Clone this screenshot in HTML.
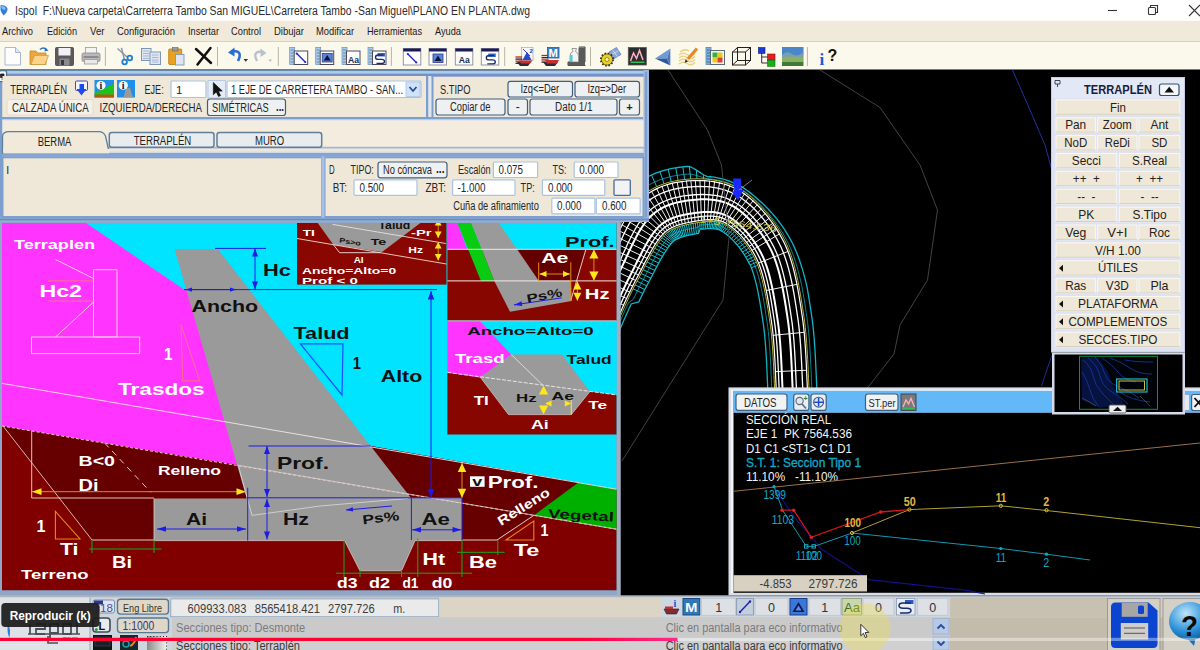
<!DOCTYPE html>
<html lang="es"><head><meta charset="utf-8"><title>Ispol - PLANO EN PLANTA.dwg</title>
<style>html,body{margin:0;padding:0;background:#000;overflow:hidden}body{width:1200px;height:650px}svg{display:block;font-family:"Liberation Sans",sans-serif}text{white-space:pre}</style></head>
<body>
<svg width="1200" height="650" viewBox="0 0 1200 650">
<rect x="0" y="0" width="1200" height="21" fill="#ffffff"/>
<path d="M0.5 5 L4 5.5 Q8 7 7.5 10 Q6.5 13.5 3.5 15.5 Q1.5 13 0.5 10 Z" fill="#2f7fd6" stroke="none" stroke-width="1" />
<path d="M1 6 L4 6.5 Q6.5 8 5 10 L2 9 Z" fill="#7fc0f4" stroke="none" stroke-width="1" />
<text x="15" y="15.3" font-size="12" fill="#2c2c2c" textLength="515" lengthAdjust="spacingAndGlyphs">Ispol  F:\Nueva carpeta\Carreterra Tambo San MIGUEL\Carretera Tambo -San Miguel\PLANO EN PLANTA.dwg</text>
<line x1="1108" y1="10.5" x2="1117" y2="10.5" stroke="#333" stroke-width="1.1" />
<rect x="1148.5" y="7.5" width="7" height="7" fill="none" stroke="#333" stroke-width="1.1" rx="1"/>
<path d="M1150.5 7.5 V5.5 H1157.5 V12.5 H1155.5" fill="none" stroke="#333" stroke-width="1.1" />
<line x1="1189" y1="5" x2="1200" y2="16" stroke="#333" stroke-width="1.1" />
<line x1="1189" y1="16" x2="1200" y2="5" stroke="#333" stroke-width="1.1" />
<rect x="0" y="20.8" width="1200" height="20.7" fill="#f1e9d9"/>
<text x="2" y="35" font-size="11" fill="#1a1a1a" textLength="31" lengthAdjust="spacingAndGlyphs">Archivo</text>
<text x="47" y="35" font-size="11" fill="#1a1a1a" textLength="30" lengthAdjust="spacingAndGlyphs">Edición</text>
<text x="90" y="35" font-size="11" fill="#1a1a1a" textLength="14.5" lengthAdjust="spacingAndGlyphs">Ver</text>
<text x="117" y="35" font-size="11" fill="#1a1a1a" textLength="58" lengthAdjust="spacingAndGlyphs">Configuración</text>
<text x="188" y="35" font-size="11" fill="#1a1a1a" textLength="31" lengthAdjust="spacingAndGlyphs">Insertar</text>
<text x="231" y="35" font-size="11" fill="#1a1a1a" textLength="30" lengthAdjust="spacingAndGlyphs">Control</text>
<text x="274" y="35" font-size="11" fill="#1a1a1a" textLength="30" lengthAdjust="spacingAndGlyphs">Dibujar</text>
<text x="316" y="35" font-size="11" fill="#1a1a1a" textLength="38" lengthAdjust="spacingAndGlyphs">Modificar</text>
<text x="367" y="35" font-size="11" fill="#1a1a1a" textLength="55" lengthAdjust="spacingAndGlyphs">Herramientas</text>
<text x="435" y="35" font-size="11" fill="#1a1a1a" textLength="26" lengthAdjust="spacingAndGlyphs">Ayuda</text>
<rect x="0" y="41.3" width="1200" height="28.7" fill="#fbf8ec"/>
<path d="M5 47.5 H15.5 L20.5 52.5 V65 H5 Z" fill="#fdfdff" stroke="#a9b8d4" stroke-width="1" />
<path d="M15.5 47.5 V52.5 H20.5" fill="#dfe6f4" stroke="#a9b8d4" stroke-width="1" />
<path d="M30 51 H36 L38 53 H46 V64.5 H30 Z" fill="#e9a642" stroke="#c98a2a" stroke-width="0.8" />
<path d="M31 64.5 L34.5 55.5 H48.5 L45 64.5 Z" fill="#fbd48c" stroke="#d69a3a" stroke-width="0.8" />
<path d="M40 49.5 Q43.5 46.5 46.5 49.5" fill="none" stroke="#2a6fc0" stroke-width="1.6" />
<polygon points="45,47.5 48.5,50.5 44.5,51.5" fill="#2a6fc0" stroke="none" stroke-width="1" />
<rect x="55.5" y="47.5" width="18" height="18" fill="#5a5a5c" stroke="#444" stroke-width="0.8" rx="1"/>
<rect x="58.5" y="48" width="12" height="7.5" fill="#f2f2f4"/>
<rect x="59.5" y="58.5" width="10" height="7" fill="#8a8a8c"/>
<rect x="61" y="60" width="3" height="5" fill="#3a3a3c"/>
<rect x="85.5" y="47.5" width="11" height="6" fill="#f4f4f4" stroke="#999" stroke-width="0.8"/>
<rect x="82" y="53" width="18" height="8.5" fill="#b9b9bb" stroke="#8a8a8a" stroke-width="0.8" rx="1.5"/>
<rect x="84.5" y="59.5" width="13" height="4.5" fill="#e9e9e9" stroke="#999" stroke-width="0.8"/>
<line x1="83.5" y1="57" x2="98.5" y2="57" stroke="#6e6e70" stroke-width="1.2" />
<line x1="105.4" y1="47" x2="105.4" y2="66" stroke="#b8b4a8" stroke-width="1" />
<line x1="117.5" y1="48.5" x2="127" y2="57" stroke="#8c98a8" stroke-width="1.5" />
<line x1="121.5" y1="47.8" x2="124.3" y2="59.5" stroke="#8c98a8" stroke-width="1.5" />
<circle cx="129.8" cy="58" r="2.3" fill="none" stroke="#1e7fd0" stroke-width="1.8" />
<circle cx="124.6" cy="62" r="2.3" fill="none" stroke="#1e7fd0" stroke-width="1.8" />
<rect x="141.5" y="48.5" width="9.5" height="12" fill="#dfe6f2" stroke="#7f95b8" stroke-width="1"/>
<rect x="150" y="52" width="10.5" height="12.5" fill="#dfe6f2" stroke="#7f95b8" stroke-width="1"/>
<line x1="152" y1="55" x2="158.5" y2="55" stroke="#8fa4c4" stroke-width="0.7" />
<line x1="152" y1="57.5" x2="158.5" y2="57.5" stroke="#8fa4c4" stroke-width="0.7" />
<line x1="152" y1="60" x2="158.5" y2="60" stroke="#8fa4c4" stroke-width="0.7" />
<line x1="152" y1="62" x2="158.5" y2="62" stroke="#8fa4c4" stroke-width="0.7" />
<line x1="143" y1="51" x2="149" y2="51" stroke="#8fa4c4" stroke-width="0.7" />
<line x1="143" y1="53.5" x2="149" y2="53.5" stroke="#8fa4c4" stroke-width="0.7" />
<line x1="143" y1="56" x2="149" y2="56" stroke="#8fa4c4" stroke-width="0.7" />
<line x1="143" y1="58.5" x2="149" y2="58.5" stroke="#8fa4c4" stroke-width="0.7" />
<rect x="168.7" y="49" width="13" height="15.5" fill="#e9a21f" stroke="#b87a10" stroke-width="0.8" rx="1"/>
<rect x="172.5" y="47.5" width="5.5" height="3.5" fill="#9c9c9c" stroke="#666" stroke-width="0.6"/>
<rect x="175.5" y="54.5" width="8.5" height="10.5" fill="#dfe6f2" stroke="#7f95b8" stroke-width="0.9"/>
<line x1="196" y1="49" x2="211" y2="63" stroke="#111" stroke-width="2.5" stroke-linecap="round"/>
<line x1="210.5" y1="48" x2="197.5" y2="64.5" stroke="#111" stroke-width="2.5" stroke-linecap="round"/>
<line x1="217.5" y1="47" x2="217.5" y2="66" stroke="#b8b4a8" stroke-width="1" />
<path d="M238 61 Q243 51 233.5 51" fill="none" stroke="#2a6fd0" stroke-width="2.6" />
<polygon points="228,52.5 234.5,47.5 234.5,56.5" fill="#2a6fd0" stroke="none" stroke-width="1" />
<polygon points="243.5,59 248,59 245.75,61.8" fill="#333" stroke="none" stroke-width="1" />
<path d="M257 61 Q252 51.5 261.5 51.5" fill="none" stroke="#b9c2cc" stroke-width="2.4" />
<polygon points="266.5,53 260.5,48.5 260.5,57" fill="#b9c2cc" stroke="none" stroke-width="1" />
<polygon points="268.5,59.5 272,59.5 270.2,61.8" fill="#b5b5b5" stroke="none" stroke-width="1" />
<line x1="278.3" y1="47" x2="278.3" y2="66" stroke="#b8b4a8" stroke-width="1" />
<rect x="289.7" y="47.5" width="5" height="17" fill="#a9cbe8" stroke="#6d8fb5" stroke-width="0.7"/>
<line x1="290.7" y1="50" x2="293.7" y2="50" stroke="#4a6a90" stroke-width="0.7" />
<line x1="290.7" y1="53" x2="293.7" y2="53" stroke="#4a6a90" stroke-width="0.7" />
<line x1="290.7" y1="56" x2="293.7" y2="56" stroke="#4a6a90" stroke-width="0.7" />
<line x1="290.7" y1="59" x2="293.7" y2="59" stroke="#4a6a90" stroke-width="0.7" />
<line x1="290.7" y1="62" x2="293.7" y2="62" stroke="#4a6a90" stroke-width="0.7" />
<rect x="294.2" y="51" width="13.5" height="13.5" fill="#fdfdfd" stroke="#4a4a5a" stroke-width="1"/>
<line x1="296.7" y1="53.5" x2="305.2" y2="62" stroke="#2a2ac8" stroke-width="1.4" />
<circle cx="296.7" cy="53.5" r="1.1" fill="#2a2ac8" stroke="none" stroke-width="1" />
<circle cx="305.2" cy="62" r="1.1" fill="#2a2ac8" stroke="none" stroke-width="1" />
<rect x="315.7" y="47.5" width="5" height="17" fill="#a9cbe8" stroke="#6d8fb5" stroke-width="0.7"/>
<line x1="316.7" y1="50" x2="319.7" y2="50" stroke="#4a6a90" stroke-width="0.7" />
<line x1="316.7" y1="53" x2="319.7" y2="53" stroke="#4a6a90" stroke-width="0.7" />
<line x1="316.7" y1="56" x2="319.7" y2="56" stroke="#4a6a90" stroke-width="0.7" />
<line x1="316.7" y1="59" x2="319.7" y2="59" stroke="#4a6a90" stroke-width="0.7" />
<line x1="316.7" y1="62" x2="319.7" y2="62" stroke="#4a6a90" stroke-width="0.7" />
<rect x="320.2" y="51" width="13.5" height="13.5" fill="#fdfdfd" stroke="#4a4a5a" stroke-width="1"/>
<rect x="322.2" y="53.5" width="10" height="8.5" fill="#5a86d8" stroke="#2a3a8a" stroke-width="0.8"/>
<polygon points="327.2,55 330.7,60.5 323.7,60.5" fill="#101040" stroke="none" stroke-width="1" />
<rect x="342" y="47.5" width="5" height="17" fill="#a9cbe8" stroke="#6d8fb5" stroke-width="0.7"/>
<line x1="343" y1="50" x2="346" y2="50" stroke="#4a6a90" stroke-width="0.7" />
<line x1="343" y1="53" x2="346" y2="53" stroke="#4a6a90" stroke-width="0.7" />
<line x1="343" y1="56" x2="346" y2="56" stroke="#4a6a90" stroke-width="0.7" />
<line x1="343" y1="59" x2="346" y2="59" stroke="#4a6a90" stroke-width="0.7" />
<line x1="343" y1="62" x2="346" y2="62" stroke="#4a6a90" stroke-width="0.7" />
<rect x="346.5" y="51" width="13.5" height="13.5" fill="#fdfdfd" stroke="#4a4a5a" stroke-width="1"/>
<text x="348" y="62.5" font-size="9.5" fill="#14305a" font-weight="bold" textLength="11" lengthAdjust="spacingAndGlyphs">Aa</text>
<rect x="368" y="47.5" width="5" height="17" fill="#a9cbe8" stroke="#6d8fb5" stroke-width="0.7"/>
<line x1="369" y1="50" x2="372" y2="50" stroke="#4a6a90" stroke-width="0.7" />
<line x1="369" y1="53" x2="372" y2="53" stroke="#4a6a90" stroke-width="0.7" />
<line x1="369" y1="56" x2="372" y2="56" stroke="#4a6a90" stroke-width="0.7" />
<line x1="369" y1="59" x2="372" y2="59" stroke="#4a6a90" stroke-width="0.7" />
<line x1="369" y1="62" x2="372" y2="62" stroke="#4a6a90" stroke-width="0.7" />
<rect x="372.5" y="51" width="13.5" height="13.5" fill="#fdfdfd" stroke="#4a4a5a" stroke-width="1"/>
<rect x="377.5" y="53" width="7.5" height="3.5" fill="#3a6ad0"/>
<path d="M383.5 55 h-5 q-3 0 -3 2.2 q0 2.2 3 2.2 h3 q3 0 3 2 q0 2 -3 2 h-5" fill="none" stroke="#1a2a6a" stroke-width="1.3" />
<line x1="391.4" y1="47" x2="391.4" y2="66" stroke="#b8b4a8" stroke-width="1" />
<rect x="403.3" y="48.5" width="17.5" height="16.5" fill="#fdfdfd" stroke="#8a8a9a" stroke-width="0.9"/>
<rect x="403.3" y="48.5" width="17.5" height="3" fill="#1a1a5a"/>
<line x1="407.8" y1="54" x2="416.3" y2="62.5" stroke="#2a2ac8" stroke-width="1.4" />
<circle cx="407.8" cy="54" r="1.1" fill="#2a2ac8" stroke="none" stroke-width="1" />
<circle cx="416.3" cy="62.5" r="1.1" fill="#2a2ac8" stroke="none" stroke-width="1" />
<rect x="429" y="48.5" width="17.5" height="16.5" fill="#fdfdfd" stroke="#8a8a9a" stroke-width="0.9"/>
<rect x="429" y="48.5" width="17.5" height="3" fill="#1a1a5a"/>
<rect x="433" y="54" width="10" height="8.5" fill="#5a86d8" stroke="#2a3a8a" stroke-width="0.8"/>
<polygon points="438,55.5 441.5,61 434.5,61" fill="#101040" stroke="none" stroke-width="1" />
<rect x="455.3" y="48.5" width="17.5" height="16.5" fill="#fdfdfd" stroke="#8a8a9a" stroke-width="0.9"/>
<rect x="455.3" y="48.5" width="17.5" height="3" fill="#1a1a5a"/>
<text x="458.8" y="63" font-size="9.5" fill="#14305a" font-weight="bold" textLength="11" lengthAdjust="spacingAndGlyphs">Aa</text>
<rect x="481.3" y="48.5" width="17.5" height="16.5" fill="#fdfdfd" stroke="#8a8a9a" stroke-width="0.9"/>
<rect x="481.3" y="48.5" width="17.5" height="3" fill="#1a1a5a"/>
<rect x="488.3" y="53.5" width="7.5" height="3.5" fill="#3a6ad0"/>
<path d="M494.3 55.5 h-5 q-3 0 -3 2.2 q0 2.2 3 2.2 h3 q3 0 3 2 q0 2 -3 2 h-5" fill="none" stroke="#1a2a6a" stroke-width="1.3" />
<line x1="504.7" y1="47" x2="504.7" y2="66" stroke="#b8b4a8" stroke-width="1" />
<rect x="521.5" y="47.5" width="11.5" height="13" fill="#f4f6fb" stroke="#9ab" stroke-width="0.7"/>
<polygon points="527,52 531.5,60 522.5,60" fill="#2a4ac8" stroke="none" stroke-width="1" />
<line x1="523" y1="49" x2="530" y2="56" stroke="#2a2ac8" stroke-width="0.9" />
<text x="529.5" y="52.5" font-size="6" fill="#2a4a9a" font-weight="bold">2</text>
<line x1="515.5" y1="57" x2="522" y2="57" stroke="#c02020" stroke-width="1.3" />
<line x1="515.5" y1="59.1" x2="522.3" y2="59.1" stroke="#222" stroke-width="1.3" />
<line x1="515.5" y1="61.2" x2="522.6" y2="61.2" stroke="#c02020" stroke-width="1.3" />
<line x1="515.5" y1="63.3" x2="522.9" y2="63.3" stroke="#222" stroke-width="1.3" />
<path d="M517 62 L531 62 L528 66 L520 66 Z" fill="#2a2a3a" stroke="none" stroke-width="1" />
<path d="M519 60.5 L532.5 60.5 L530 63.5 L521 63.5 Z" fill="#c83030" stroke="none" stroke-width="1" />
<rect x="547.5" y="47.5" width="11.5" height="10.5" fill="#3b82c4" stroke="#1f5f9f" stroke-width="0.8"/>
<text x="548.6" y="57" font-size="10.5" fill="#ffffff" font-weight="bold" textLength="9.4" lengthAdjust="spacingAndGlyphs">M</text>
<line x1="541.5" y1="55.5" x2="548" y2="55.5" stroke="#c02020" stroke-width="1.3" />
<line x1="541.5" y1="57.7" x2="548.3" y2="57.7" stroke="#222" stroke-width="1.3" />
<line x1="541.5" y1="59.9" x2="548.6" y2="59.9" stroke="#c02020" stroke-width="1.3" />
<line x1="541.5" y1="62.1" x2="548.9" y2="62.1" stroke="#222" stroke-width="1.3" />
<path d="M543 62 L558 62 L555 66 L546 66 Z" fill="#2a2a3a" stroke="none" stroke-width="1" />
<path d="M545 60 L559 60 L557 63.5 L547 63.5 Z" fill="#c83030" stroke="none" stroke-width="1" />
<path d="M579 47 H585 V62 H568 V65.5 H585.5" fill="none" stroke="#4a4a4a" stroke-width="1" />
<path d="M578.5 47.5 H585 V65.5 H568 V62 H578.5 Z" fill="#5a5a5a" stroke="none" stroke-width="1" />
<path d="M570 62 V56 Q570 52.5 573 51.5 L572 48.5 H576.5 L575.5 51.5 Q578.5 52.5 578.5 56 V62 Z" fill="#f4f4f4" stroke="#777" stroke-width="0.7" />
<rect x="570.3" y="55" width="2.2" height="7" fill="#30d0e0"/>
<line x1="590.5" y1="47" x2="590.5" y2="66" stroke="#b8b4a8" stroke-width="1" />
<polygon points="609,52 616.5,47.5 621,54.5 613.5,59" fill="#8aa6d6" stroke="#5a78b0" stroke-width="0.7" />
<line x1="611" y1="55" x2="618.6" y2="50.6" stroke="#e8eef8" stroke-width="0.6" />
<line x1="612.6" y1="49.8" x2="617.3" y2="56.8" stroke="#e8eef8" stroke-width="0.6" />
<circle cx="607" cy="59.5" r="5.6" fill="#e8d020" stroke="#6a5a10" stroke-width="0.9" />
<circle cx="607" cy="59.5" r="6.3" fill="none" stroke="#3a3210" stroke-width="1.6" stroke-dasharray="1.6 1.7"/>
<circle cx="607" cy="59.5" r="2" fill="#fff7a0" stroke="#6a5a10" stroke-width="0.6" />
<rect x="628.3" y="47.5" width="18" height="17.5" fill="#2c2c2e" stroke="#555" stroke-width="0.8"/>
<polyline points="630.5,61 633.5,53 636.5,58.5 639.5,50.5 643,60" fill="none" stroke="#ffb0c8" stroke-width="1.5" />
<line x1="630.5" y1="62.3" x2="644.5" y2="62.3" stroke="#30c050" stroke-width="1.6" />
<polygon points="655,58.5 670.3,48.5 667,58.5" fill="#6f9ad8" stroke="none" stroke-width="1" />
<polygon points="655,58.5 667,58.5 670.3,65.5" fill="#2f5aa0" stroke="none" stroke-width="1" />
<polygon points="667,58.5 670.3,48.5 670.3,65.5" fill="#4a78c0" stroke="none" stroke-width="1" />
<path d="M679 55 q4 -3.5 8 -0.5 t8 -1" fill="none" stroke="#ecd27a" stroke-width="1.3" />
<path d="M679 58 q4 -3.5 8 -0.5 t8 -1" fill="none" stroke="#ecd27a" stroke-width="1.3" />
<path d="M679 61 q4 -3.5 8 -0.5 t8 -1" fill="none" stroke="#ecd27a" stroke-width="1.3" />
<path d="M679 64 q4 -3.5 8 -0.5 t8 -1" fill="none" stroke="#ecd27a" stroke-width="1.3" />
<path d="M680 52 q5 -4 9 -1" fill="none" stroke="#ecd27a" stroke-width="1.3" />
<line x1="686.5" y1="60.5" x2="697" y2="48.5" stroke="#e8862a" stroke-width="3.2" />
<line x1="686.5" y1="60.5" x2="688" y2="58.8" stroke="#f4dcb0" stroke-width="3.2" />
<polygon points="684.5,63 685.7,59.3 688,61.4" fill="#333" stroke="none" stroke-width="1" />
<rect x="706" y="47.5" width="5" height="17" fill="#7fb2e0" stroke="#4a78a8" stroke-width="0.7"/>
<line x1="707" y1="50" x2="710" y2="50" stroke="#2a4a78" stroke-width="0.7" />
<line x1="707" y1="53" x2="710" y2="53" stroke="#2a4a78" stroke-width="0.7" />
<line x1="707" y1="56" x2="710" y2="56" stroke="#2a4a78" stroke-width="0.7" />
<line x1="707" y1="59" x2="710" y2="59" stroke="#2a4a78" stroke-width="0.7" />
<line x1="707" y1="62" x2="710" y2="62" stroke="#2a4a78" stroke-width="0.7" />
<rect x="710.5" y="50.5" width="14" height="14" fill="#f4f4f4" stroke="#5a6a7a" stroke-width="1"/>
<rect x="712.5" y="52.5" width="5" height="5" fill="#38b038"/>
<rect x="717.5" y="52.5" width="5" height="5" fill="#e8c828"/>
<rect x="712.5" y="57.5" width="5" height="5" fill="#e8c828"/>
<rect x="717.5" y="57.5" width="5" height="5" fill="#e04028"/>
<rect x="732.5" y="52" width="13" height="13" fill="none" stroke="#222" stroke-width="1"/>
<rect x="737.5" y="47.5" width="13" height="13" fill="none" stroke="#222" stroke-width="1"/>
<line x1="732.5" y1="52" x2="737.5" y2="47.5" stroke="#222" stroke-width="1" />
<line x1="745.5" y1="52" x2="750.5" y2="47.5" stroke="#222" stroke-width="1" />
<line x1="732.5" y1="65" x2="737.5" y2="60.5" stroke="#222" stroke-width="1" />
<line x1="745.5" y1="65" x2="750.5" y2="60.5" stroke="#222" stroke-width="1" />
<polyline points="761.7,52 761.7,63 768,63" fill="none" stroke="#333" stroke-width="1" />
<line x1="761.7" y1="57" x2="768" y2="57" stroke="#333" stroke-width="1" />
<rect x="758.4" y="47.5" width="6.6" height="6" fill="#1a3ad0" stroke="#102080" stroke-width="0.6"/>
<rect x="767.6" y="54" width="7.4" height="6" fill="#e02020" stroke="#901010" stroke-width="0.6"/>
<rect x="767.6" y="60.3" width="7.4" height="6" fill="#18b018" stroke="#0a700a" stroke-width="0.6"/>
<rect x="782" y="47" width="21.3" height="19" fill="#5a9a4a"/>
<rect x="782" y="47" width="21.3" height="8" fill="#4a86c8"/>
<path d="M782 55 Q787 50 792 54 T803.3 52 V58 H782 Z" fill="#7aa0b0" stroke="none" stroke-width="1" />
<path d="M782 58 Q790 55 803.3 58 V62 H782 Z" fill="#8ab060" stroke="none" stroke-width="1" />
<rect x="782" y="62" width="21.3" height="4" fill="#3f7a36"/>
<line x1="807.4" y1="47" x2="807.4" y2="66" stroke="#b8b4a8" stroke-width="1" />
<text x="819.5" y="65" font-size="17" fill="#1a5ae0" font-weight="bold" style="font-family:Liberation Serif,serif">i</text>
<text x="827.5" y="61" font-size="16" fill="#111" font-weight="bold">?</text>
<rect x="0" y="69.5" width="1200" height="529" fill="#000000"/>
<path d="M564.19 326.18 L565.1 323.96 L566.17 321.28 L567.43 318.1 L568.86 314.5 L570.43 310.55 L572.11 306.29 L573.9 301.79 L575.76 297.11 L577.69 292.3 L579.65 287.4 L581.65 282.48 L583.65 277.58 L585.66 272.74 L587.64 268.02 L589.61 263.45 L591.45 259.25 L593.08 255.47 L594.65 251.74 L596.25 247.87 L597.89 243.88 L599.57 239.8 L601.3 235.65 L603.11 231.43 L604.99 227.18 L606.98 222.89 L609.08 218.57 L611.35 214.25 L613.8 209.92 L616.48 205.59 L619.46 201.26 L622.8 196.96 L626.51 192.79 L630.44 188.94 L634.49 185.48 L638.66 182.37 L642.91 179.6 L647.2 177.16 L651.49 175.04 L655.75 173.22 L659.95 171.68 L664.06 170.39 L668.07 169.33 L671.97 168.46 L675.73 167.77 L679.35 167.24 L682.82 166.83 L686.13 166.52 L689.34 166.3 L692.81 168.01 L696.37 170.15 L699.92 172.38 L703.43 174.73 L706.9 176.38 L710.43 176.73 L714.01 177.22 L717.64 177.86 L721.31 178.67 L725.01 179.67 L728.72 180.87 L732.44 182.28 L736.14 183.92 L739.8 185.79 L743.41 187.9 L746.86 190.21 L750.1 192.63 L753.19 195.16 L756.22 197.83 L759.32 200.5 L762.39 203.28 L765.42 206.2 L768.4 209.25 L771.33 212.44 L774.2 215.75 L777 219.19 L779.72 222.74 L782.37 226.42 L784.92 230.2 L787.37 234.11 L789.72 238.12 L791.95 242.28 L794.07 246.64 L796.04 251.13 L797.85 255.68 L799.52 260.29 L801.07 264.95 L802.51 269.65 L803.85 274.37 L805.11 279.11 L806.29 283.86 L807.31 288.62 L808.15 293.37 L808.94 298.09 L809.68 302.75 L810.39 307.35 L811.07 311.86 L811.76 316.44 L812.43 321.36 L813.04 326.59 L813.58 331.93 L814.06 337.35 L814.48 342.81 L814.85 348.26 L815.18 353.66 L815.47 358.94 L815.72 364.06 L815.95 368.97 L816.15 373.6 L816.34 377.9 L816.51 381.79 L816.66 385.22 L816.81 388.08 L816.95 390.47" fill="none" stroke="#12b4c4" stroke-width="1.3" />
<path d="M612.44 346.69 L613.48 344.34 L614.72 341.48 L616.12 338.24 L617.66 334.64 L619.34 330.74 L621.13 326.59 L623.02 322.23 L624.99 317.74 L627.02 313.15 L629.09 308.53 L631.19 303.93 L638.78 301.83 L640.85 297.49 L642.87 293.37 L644.82 289.54 L646.75 285.88 L648.78 282.06 L650.85 278.1 L652.88 274.19 L654.86 270.36 L656.82 266.64 L658.74 263.05 L660.62 259.61 L662.48 256.36 L664.29 253.32 L666.05 250.52 L667.74 248.01 L669.33 245.82 L670.81 243.97 L672.12 242.52 L673.21 241.48 L674.08 240.79 L674.9 240.25 L675.74 239.74 L676.62 239.27 L677.53 238.82 L678.51 238.38 L679.58 237.93 L680.75 237.49 L682.04 237.05 L683.44 236.6 L684.97 236.16 L686.62 235.73 L688.38 235.31 L690.26 234.89 L692.25 234.49 L694.34 234.09 L696.45 233.71 L698.45 233.36 L700.09 229.05 L702.02 228.77 L703.88 229.03 L705.64 228.85 L707.33 228.71 L708.95 228.63 L710.49 228.6 L711.94 228.62 L713.33 228.7 L714.65 228.83 L715.91 229.03 L717.12 229.28 L718.29 229.6 L719.45 230.01 L720.69 230.56 L722.18 231.39 L723.88 232.48 L725.68 233.76 L727.55 235.23 L729.47 236.87 L731.41 238.68 L733.36 240.62 L735.29 242.7 L737.2 244.9 L739.06 247.21 L740.86 249.6 L742.59 252.08 L744.24 254.61 L745.8 257.2 L747.24 259.81 L748.56 262.41 L750.22 264.85 L751.37 267.72 L752.49 270.82 L753.57 274.15 L754.6 277.67 L755.58 281.36 L756.51 285.21 L757.4 289.19 L758.24 293.28 L759.04 297.46 L759.8 301.72 L760.53 306.04 L761.24 310.4 L761.92 314.78 L762.59 319.18 L763.23 323.42 L763.81 327.56 L764.32 331.91 L764.79 336.54 L765.22 341.38 L765.6 346.36 L765.95 351.41 L766.26 356.48 L766.53 361.51 L766.78 366.42 L767 371.18 L767.2 375.72 L767.38 380 L767.55 383.96 L767.72 387.57 L767.88 390.8 L768.04 393.47" fill="none" stroke="#12b4c4" stroke-width="1.3" />
<path d="M571.28 329.19 L572.19 326.95 L573.28 324.24 L574.55 321.05 L575.98 317.44 L577.55 313.48 L579.23 309.24 L581.01 304.75 L582.86 300.09 L584.78 295.29 L586.73 290.43 L588.71 285.54 L590.7 280.68 L592.68 275.89 L594.64 271.23 L596.57 266.74 L598.38 262.59 L600.03 258.79 L601.62 255.01 L603.23 251.11 L604.87 247.13 L606.54 243.07 L608.25 238.96 L610.02 234.82 L611.86 230.66 L613.78 226.5 L615.8 222.34 L617.95 218.21 L620.27 214.1 L622.77 210.03 L625.52 206.01 L628.57 202.06 L631.93 198.26 L635.48 194.76 L639.15 191.61 L642.94 188.77 L646.8 186.24 L650.71 184.01 L654.63 182.07 L658.54 180.4 L662.41 178.98 L666.22 177.78 L669.96 176.79 L673.61 175.99 L677.15 175.34 L680.58 174.84 L683.88 174.45 L687.06 174.17 L690.15 173.96 L693.38 174.65 L696.71 175.58 L700.07 176.59 L703.46 177.71 L706.85 178.58 L710.29 178.92 L713.79 179.41 L717.33 180.04 L720.9 180.83 L724.5 181.81 L728.1 182.98 L731.7 184.35 L735.29 185.94 L738.83 187.76 L742.32 189.81 L745.67 192.06 L748.81 194.42 L751.83 196.89 L754.8 199.5 L757.76 202.19 L760.7 205.01 L763.58 207.96 L766.42 211.03 L769.19 214.23 L771.91 217.55 L774.56 220.99 L777.13 224.54 L779.61 228.19 L782 231.96 L784.29 235.82 L786.47 239.78 L788.53 243.87 L790.48 248.13 L792.27 252.52 L793.92 256.99 L795.44 261.52 L796.84 266.11 L798.13 270.74 L799.34 275.41 L800.46 280.1 L801.5 284.8 L802.45 289.51 L803.27 294.21 L804.05 298.89 L804.79 303.52 L805.5 308.1 L806.18 312.6 L806.86 317.14 L807.52 321.99 L808.12 327.12 L808.66 332.39 L809.13 337.76 L809.54 343.17 L809.91 348.58 L810.24 353.94 L810.52 359.2 L810.78 364.3 L811.01 369.19 L811.21 373.81 L811.39 378.11 L811.56 382.01 L811.72 385.46 L811.86 388.36 L812.01 390.77" fill="none" stroke="#10a0b0" stroke-width="0.8" />
<path d="M609.68 345.52 L610.72 343.18 L611.95 340.33 L613.35 337.09 L614.89 333.5 L616.57 329.59 L618.36 325.44 L620.25 321.08 L622.22 316.58 L624.25 311.98 L626.33 307.35 L628.43 302.74 L633.29 299.41 L635.37 295.04 L637.42 290.87 L639.39 286.98 L641.35 283.28 L643.37 279.48 L645.42 275.55 L647.44 271.66 L649.42 267.83 L651.38 264.09 L653.32 260.46 L655.24 256.97 L657.13 253.64 L658.99 250.5 L660.81 247.59 L662.59 244.93 L664.3 242.56 L665.91 240.51 L667.4 238.82 L668.71 237.51 L669.86 236.53 L670.97 235.72 L672.11 234.96 L673.29 234.28 L674.5 233.64 L675.78 233.03 L677.14 232.46 L678.58 231.9 L680.12 231.36 L681.76 230.85 L683.5 230.35 L685.34 229.87 L687.28 229.41 L689.31 228.97 L691.42 228.55 L693.62 228.14 L695.82 227.74 L697.94 227.38 L699.84 225.06 L701.87 224.77 L703.84 224.78 L705.74 224.6 L707.59 224.47 L709.37 224.4 L711.08 224.39 L712.73 224.44 L714.32 224.56 L715.84 224.76 L717.32 225.02 L718.76 225.36 L720.16 225.79 L721.55 226.31 L723 227 L724.66 227.94 L726.5 229.13 L728.43 230.52 L730.42 232.09 L732.44 233.84 L734.49 235.74 L736.53 237.79 L738.55 239.97 L740.54 242.27 L742.48 244.68 L744.36 247.19 L746.17 249.77 L747.89 252.43 L749.51 255.13 L751.03 257.88 L752.41 260.62 L753.91 263.32 L755.12 266.32 L756.29 269.56 L757.4 272.99 L758.46 276.61 L759.46 280.39 L760.41 284.32 L761.31 288.36 L762.16 292.51 L762.97 296.74 L763.74 301.04 L764.48 305.39 L765.19 309.78 L765.88 314.18 L766.55 318.58 L767.19 322.85 L767.78 327.05 L768.3 331.47 L768.77 336.16 L769.2 341.05 L769.59 346.07 L769.94 351.16 L770.25 356.25 L770.53 361.3 L770.77 366.23 L770.99 371 L771.19 375.55 L771.38 379.83 L771.55 383.78 L771.71 387.38 L771.88 390.58 L772.04 393.22" fill="none" stroke="#10a0b0" stroke-width="0.8" />
<path d="M564.19 326.18 L575.97 331.19 M566.17 321.28 L577.99 326.2 M568.86 314.5 L580.69 319.39 M572.11 306.29 L583.94 311.19 M575.76 297.11 L587.57 302.06 M579.65 287.4 L591.42 292.43 M583.65 277.58 L595.37 282.73 M587.64 268.02 L599.28 273.36 M642.87 293.37 L633.05 288.87 M644.82 289.54 L635.05 284.92 M591.45 259.25 L602.98 264.8 M646.75 285.88 L637.02 281.2 M648.78 282.06 L639.04 277.41 M594.65 251.74 L606.24 257.17 M650.85 278.1 L641.07 273.51 M652.88 274.19 L643.08 269.64 M597.89 243.88 L609.49 249.28 M654.86 270.36 L645.07 265.81 M656.82 266.64 L647.04 262.06 M601.3 235.65 L612.86 241.16 M658.74 263.05 L648.99 258.4 M660.62 259.61 L650.93 254.86 M604.99 227.18 L616.4 232.97 M662.48 256.36 L652.85 251.47 M664.29 253.32 L654.75 248.25 M609.08 218.57 L620.25 224.84 M666.05 250.52 L656.63 245.24 M667.74 248.01 L658.47 242.46 M613.8 209.92 L624.55 216.87 M669.33 245.82 L660.26 239.95 M670.81 243.97 L661.99 237.74 M619.46 201.26 L629.54 209.15 M672.12 242.52 L663.62 235.86 M673.21 241.48 L665.11 234.33 M626.51 192.79 L635.52 201.88 M674.08 240.79 L666.48 233.12 M674.9 240.25 L667.82 232.09 M634.49 185.48 L642.24 195.67 M675.74 239.74 L669.21 231.14 M676.62 239.27 L670.62 230.28 M642.91 179.6 L649.37 190.65 M677.53 238.82 L672.08 229.49 M678.51 238.38 L673.6 228.76 M651.49 175.04 L656.71 186.73 M679.58 237.93 L675.18 228.07 M680.75 237.49 L676.84 227.43 M659.95 171.68 L664.04 183.81 M682.04 237.05 L678.58 226.82 M683.44 236.6 L680.41 226.24 M668.07 169.33 L671.21 181.74 M684.97 236.16 L682.32 225.69 M686.62 235.73 L684.32 225.18 M675.73 167.77 L678.09 180.36 M688.38 235.31 L686.39 224.69 M690.26 234.89 L688.54 224.23 M682.82 166.83 L684.59 179.5 M692.25 234.49 L690.76 223.79 M694.34 234.09 L693.04 223.37 M689.34 166.3 L690.68 179.03 M696.45 233.71 L695.32 222.97 M698.45 233.36 L697.52 222.6 M696.37 170.15 L696.92 178.82 M700.09 229.05 L699.67 222.26 M702.02 228.77 L701.76 221.97 M703.43 174.73 L703.47 178.95 M703.88 229.03 L703.82 221.73 M705.64 228.85 L705.82 221.55 M707.33 228.71 L707.77 221.42 M708.95 228.63 L709.66 221.36 M710.49 228.6 L711.5 221.37 M711.94 228.62 L713.29 221.45 M713.33 228.7 L715.02 221.6 M714.65 228.83 L716.7 221.83 M715.91 229.03 L718.34 222.14 M717.12 229.28 L719.94 222.55 M718.29 229.6 L721.51 223.05 M719.45 230.01 L723.06 223.66 M720.69 230.56 L724.66 224.44 M722.18 231.39 L726.44 225.47 M723.88 232.48 L728.39 226.73 M725.68 233.76 L730.4 228.2 M727.55 235.23 L732.48 229.84 M729.47 236.87 L734.58 231.66 M731.41 238.68 L736.69 233.63 M733.36 240.62 L738.8 235.75 M735.29 242.7 L740.88 238.01 M737.2 244.9 L742.93 240.39 M739.06 247.21 L744.93 242.87 M740.86 249.6 L746.87 245.45 M742.59 252.08 L748.73 248.12 M744.24 254.61 L750.5 250.86 M745.8 257.2 L752.18 253.65 M747.24 259.81 L753.74 256.49 M748.56 262.41 L755.18 259.34 M750.22 264.85 L756.5 262.25 M751.37 267.72 L757.75 265.35" fill="none" stroke="#14c0d0" stroke-width="1" />
<path d="M577.07 331.68 L606.93 344.32 M578.47 328.21 L608.49 340.78 M580.25 323.76 L610.44 336.26 M582.36 318.44 L612.71 330.97 M584.74 312.43 L615.25 325.07 M587.32 305.92 L618.01 318.71 M590.06 299.06 L620.93 312.08 M592.89 292.02 L623.95 305.33 M595.75 284.96 L627.03 298.64 M598.61 278.04 L630.09 292.19 M601.41 271.42 L633.06 286.18 M604.04 265.36 L635.96 280.64 M606.45 259.77 L638.88 275.13 M608.8 254.12 L641.81 269.49 M611.19 248.31 L644.69 263.94 M613.63 242.41 L647.55 258.55 M616.17 236.47 L650.37 253.4 M618.83 230.54 L653.16 248.57 M621.67 224.68 L655.91 244.14 M624.75 218.92 L658.59 240.21 M628.15 213.3 L661.15 236.87 M632 207.86 L663.52 234.23 M636.35 202.75 L665.65 232.25 M641.11 198.18 L667.7 230.71 M646.1 194.25 L669.84 229.35 M651.27 190.91 L672.06 228.16 M656.52 188.14 L674.4 227.1 M661.79 185.89 L676.9 226.13 M667.01 184.12 L679.57 225.24 M672.12 182.76 L682.41 224.43 M677.08 181.74 L685.42 223.68 M681.86 181.02 L688.57 223 M686.42 180.54 L691.86 222.37 M690.82 180.22 L695.18 221.78 M695.28 180.05 L698.4 221.24 M699.92 180.03 L701.52 220.8 M704.69 180.22 L704.54 220.46 M709.58 180.65 L707.47 220.24 M714.57 181.35 L710.29 220.16 M719.63 182.38 L713 220.23 M724.73 183.76 L715.61 220.47 M729.84 185.54 L718.12 220.88 M734.92 187.76 L720.54 221.48 M739.91 190.45 L722.91 222.31 M744.67 193.55 L725.33 223.45 M749.11 196.96 L728.03 225.06 M753.37 200.63 L730.99 227.14 M757.53 204.6 L734.06 229.61 M761.58 208.84 L737.17 232.43 M765.52 213.35 L740.27 235.56 M769.34 218.11 L743.31 238.97 M773.01 223.1 L746.26 242.62 M776.51 228.32 L749.06 246.48 M779.82 233.74 L751.69 250.49 M788.3 251.3 L758.19 263.2 M797.34 284.29 L765.86 290.59 M804.58 332.29 L772.71 335.35 M807 370.23 L775.03 371.67" fill="none" stroke="#f0f0f0" stroke-width="1" />
<path d="M577.47 331.82 L578.39 329.56 L579.49 326.83 L580.77 323.62 L582.2 320.01 L583.77 316.05 L585.45 311.81 L587.23 307.34 L589.08 302.69 L590.99 297.92 L592.94 293.08 L594.91 288.22 L596.88 283.4 L598.85 278.66 L600.78 274.05 L602.68 269.63 L604.48 265.53 L606.14 261.71 L607.76 257.88 L609.38 253.97 L611.02 249.99 L612.69 245.95 L614.39 241.89 L616.13 237.81 L617.92 233.74 L619.79 229.69 L621.75 225.68 L623.81 221.71 L626 217.8 L628.35 213.97 L630.91 210.23 L633.7 206.59 L636.75 203.12 L639.97 199.94 L643.3 197.07 L646.74 194.48 L650.26 192.17 L653.83 190.12 L657.43 188.34 L661.03 186.8 L664.61 185.48 L668.15 184.37 L671.64 183.45 L675.07 182.69 L678.41 182.09 L681.67 181.61 L684.83 181.24 L687.88 180.97 L690.87 180.77 L693.9 180.63 L697.03 180.56 L700.22 180.58 L703.48 180.69 L706.79 180.9 L710.16 181.24 L713.56 181.71 L717.01 182.32 L720.48 183.1 L723.96 184.05 L727.46 185.18 L730.94 186.51 L734.4 188.05 L737.83 189.81 L741.2 191.79 L744.43 193.96 L747.49 196.25 L750.44 198.67 L753.34 201.22 L756.19 203.92 L759 206.74 L761.76 209.7 L764.46 212.78 L767.11 215.98 L769.69 219.3 L772.21 222.72 L774.64 226.25 L776.99 229.88 L779.25 233.61 L781.39 237.43 L783.43 241.33 L785.34 245.35 L787.14 249.52 L788.79 253.82 L790.31 258.2 L791.69 262.65 L792.97 267.17 L794.14 271.74 L795.23 276.35 L796.24 280.99 L797.17 285.65 L798.05 290.31 L798.87 294.97 L799.64 299.61 L800.38 304.22 L801.08 308.78 L801.76 313.27 L802.43 317.78 L803.09 322.55 L803.68 327.61 L804.21 332.81 L804.67 338.13 L805.08 343.49 L805.45 348.87 L805.77 354.2 L806.06 359.43 L806.31 364.52 L806.54 369.39 L806.74 374.01 L806.92 378.3 L807.09 382.21 L807.25 385.67 L807.4 388.6 L807.55 391.05" fill="none" stroke="#ffffff" stroke-width="1.2" />
<path d="M581.79 333.66 L582.73 331.39 L583.85 328.64 L585.14 325.43 L586.59 321.82 L588.17 317.87 L589.87 313.64 L591.66 309.19 L593.53 304.56 L595.46 299.81 L597.43 295 L599.42 290.17 L601.42 285.39 L603.4 280.7 L605.36 276.15 L607.27 271.79 L609.09 267.75 L610.81 263.93 L612.48 260.1 L614.16 256.19 L615.86 252.23 L617.57 248.24 L619.3 244.23 L621.07 240.24 L622.89 236.26 L624.76 232.33 L626.71 228.46 L628.74 224.66 L630.88 220.96 L633.14 217.36 L635.57 213.88 L638.18 210.54 L640.99 207.4 L643.94 204.52 L646.99 201.93 L650.15 199.58 L653.37 197.49 L656.65 195.63 L659.96 194.01 L663.28 192.59 L666.6 191.38 L669.9 190.34 L673.17 189.47 L676.39 188.75 L679.55 188.16 L682.65 187.69 L685.68 187.31 L688.62 187.02 L691.5 186.79 L694.42 186.61 L697.4 186.5 L700.44 186.47 L703.53 186.53 L706.65 186.69 L709.82 186.96 L713.01 187.35 L716.22 187.88 L719.46 188.55 L722.69 189.38 L725.93 190.39 L729.15 191.57 L732.35 192.95 L735.51 194.52 L738.62 196.31 L741.63 198.28 L744.5 200.4 L747.31 202.64 L750.09 205.04 L752.83 207.59 L755.54 210.27 L758.21 213.09 L760.83 216.03 L763.4 219.1 L765.91 222.28 L768.35 225.57 L770.72 228.97 L773 232.46 L775.18 236.05 L777.26 239.72 L779.23 243.48 L781.08 247.33 L782.81 251.32 L784.41 255.45 L785.87 259.68 L787.23 264 L788.47 268.4 L789.63 272.86 L790.7 277.38 L791.69 281.95 L792.61 286.54 L793.48 291.15 L794.29 295.76 L795.06 300.37 L795.79 304.94 L796.5 309.48 L797.17 313.96 L797.84 318.44 L798.49 323.14 L799.07 328.11 L799.59 333.25 L800.05 338.51 L800.46 343.83 L800.83 349.17 L801.15 354.47 L801.43 359.68 L801.69 364.74 L801.91 369.6 L802.11 374.21 L802.3 378.5 L802.47 382.41 L802.62 385.89 L802.78 388.86 L802.93 391.33" fill="none" stroke="#ffffff" stroke-width="1.3" />
<path d="M587.68 336.16 L588.64 333.88 L589.78 331.11 L591.1 327.89 L592.57 324.29 L594.18 320.35 L595.9 316.14 L597.71 311.7 L599.61 307.1 L601.56 302.39 L603.56 297.62 L605.57 292.84 L607.6 288.11 L609.61 283.49 L611.59 279.02 L613.53 274.75 L615.39 270.78 L617.17 266.97 L618.93 263.12 L620.69 259.23 L622.45 255.3 L624.22 251.36 L626.01 247.43 L627.82 243.54 L629.66 239.7 L631.54 235.93 L633.48 232.26 L635.47 228.69 L637.53 225.26 L639.67 221.97 L641.92 218.86 L644.28 215.93 L646.76 213.22 L649.35 210.77 L652.03 208.55 L654.79 206.54 L657.62 204.75 L660.49 203.15 L663.41 201.73 L666.36 200.5 L669.32 199.42 L672.28 198.49 L675.24 197.69 L678.19 197.02 L681.1 196.45 L683.99 195.97 L686.83 195.58 L689.62 195.26 L692.37 194.99 L695.12 194.76 L697.92 194.6 L700.74 194.51 L703.59 194.5 L706.47 194.58 L709.35 194.75 L712.25 195.04 L715.16 195.45 L718.06 195.98 L720.96 196.66 L723.85 197.49 L726.71 198.47 L729.55 199.63 L732.35 200.96 L735.11 202.48 L737.8 204.18 L740.44 206.04 L743.05 208.07 L745.66 210.26 L748.25 212.6 L750.82 215.08 L753.37 217.71 L755.87 220.47 L758.34 223.35 L760.74 226.35 L763.09 229.46 L765.36 232.67 L767.54 235.98 L769.64 239.37 L771.63 242.85 L773.51 246.4 L775.26 250.02 L776.9 253.77 L778.42 257.67 L779.83 261.7 L781.13 265.84 L782.34 270.08 L783.47 274.4 L784.51 278.8 L785.49 283.26 L786.4 287.76 L787.25 292.29 L788.06 296.84 L788.82 301.39 L789.55 305.93 L790.25 310.44 L790.92 314.9 L791.59 319.34 L792.22 323.94 L792.79 328.8 L793.3 333.84 L793.76 339.03 L794.16 344.29 L794.52 349.57 L794.84 354.83 L795.13 360.01 L795.38 365.05 L795.6 369.89 L795.8 374.48 L795.99 378.77 L796.16 382.69 L796.32 386.2 L796.47 389.21 L796.62 391.72" fill="none" stroke="#ffffff" stroke-width="1.3" />
<path d="M591.21 337.67 L592.19 335.37 L593.35 332.59 L594.68 329.37 L596.16 325.77 L597.78 321.84 L599.51 317.64 L601.34 313.21 L603.25 308.63 L605.22 303.94 L607.23 299.19 L609.27 294.44 L611.31 289.74 L613.34 285.16 L615.33 280.73 L617.28 276.53 L619.16 272.6 L620.99 268.79 L622.8 264.94 L624.6 261.04 L626.4 257.13 L628.21 253.23 L630.03 249.35 L631.86 245.52 L633.72 241.76 L635.61 238.09 L637.54 234.53 L639.5 231.11 L641.52 227.84 L643.59 224.74 L645.73 221.84 L647.94 219.16 L650.23 216.72 L652.6 214.52 L655.05 212.52 L657.58 210.72 L660.16 209.1 L662.8 207.66 L665.48 206.37 L668.2 205.24 L670.95 204.24 L673.71 203.37 L676.49 202.62 L679.27 201.97 L682.04 201.42 L684.79 200.95 L687.52 200.54 L690.22 200.2 L692.88 199.91 L695.54 199.66 L698.22 199.46 L700.92 199.33 L703.63 199.28 L706.35 199.31 L709.08 199.43 L711.8 199.66 L714.52 199.99 L717.23 200.44 L719.92 201.03 L722.6 201.75 L725.25 202.61 L727.87 203.63 L730.46 204.82 L733.01 206.18 L735.51 207.71 L737.99 209.43 L740.49 211.32 L743 213.38 L745.5 215.6 L747.99 217.97 L750.46 220.48 L752.9 223.13 L755.3 225.9 L757.65 228.79 L759.93 231.79 L762.14 234.89 L764.27 238.09 L766.31 241.37 L768.25 244.73 L770.07 248.15 L771.78 251.64 L773.36 255.24 L774.83 259 L776.2 262.91 L777.48 266.94 L778.66 271.08 L779.77 275.32 L780.8 279.65 L781.76 284.04 L782.67 288.49 L783.51 292.98 L784.32 297.49 L785.07 302.01 L785.8 306.52 L786.5 311.01 L787.17 315.47 L787.83 319.88 L788.46 324.42 L789.02 329.21 L789.53 334.2 L789.98 339.34 L790.38 344.56 L790.74 349.82 L791.06 355.05 L791.34 360.21 L791.59 365.23 L791.82 370.06 L792.02 374.65 L792.2 378.93 L792.37 382.86 L792.53 386.38 L792.69 389.42 L792.84 391.95" fill="none" stroke="#ffffff" stroke-width="2" />
<path d="M600.64 341.67 L601.65 339.36 L602.85 336.54 L604.22 333.32 L605.74 329.72 L607.39 325.81 L609.16 321.63 L611.02 317.24 L612.97 312.7 L614.98 308.06 L617.04 303.38 L619.12 298.7 L621.2 294.09 L623.27 289.61 L625.31 285.31 L627.29 281.26 L629.23 277.44 L631.17 273.65 L633.11 269.78 L635.04 265.9 L636.95 262.04 L638.85 258.22 L640.75 254.47 L642.65 250.81 L644.55 247.26 L646.46 243.85 L648.36 240.61 L650.27 237.55 L652.16 234.72 L654.04 232.13 L655.9 229.81 L657.7 227.79 L659.47 226.05 L661.26 224.52 L663.11 223.12 L665 221.86 L666.95 220.72 L668.95 219.68 L671.01 218.74 L673.12 217.88 L675.3 217.1 L677.53 216.4 L679.81 215.77 L682.14 215.19 L684.52 214.67 L686.93 214.21 L689.37 213.78 L691.82 213.39 L694.27 213.03 L696.67 212.7 L699.04 212.42 L701.4 212.2 L703.74 212.03 L706.05 211.93 L708.33 211.91 L710.59 211.96 L712.81 212.1 L715 212.34 L717.15 212.67 L719.26 213.1 L721.34 213.65 L723.39 214.32 L725.41 215.11 L727.39 216.04 L729.39 217.14 L731.48 218.47 L733.67 220 L735.91 221.72 L738.17 223.62 L740.45 225.67 L742.72 227.88 L744.98 230.22 L747.2 232.7 L749.38 235.3 L751.51 238.01 L753.57 240.82 L755.55 243.72 L757.44 246.69 L759.24 249.73 L760.92 252.83 L762.47 255.96 L763.91 259.17 L765.26 262.56 L766.53 266.14 L767.73 269.88 L768.85 273.77 L769.91 277.79 L770.91 281.92 L771.84 286.14 L772.72 290.44 L773.55 294.8 L774.34 299.21 L775.09 303.65 L775.8 308.1 L776.5 312.55 L777.17 316.98 L777.82 321.32 L778.43 325.69 L778.97 330.31 L779.46 335.15 L779.91 340.17 L780.3 345.29 L780.65 350.47 L780.97 355.63 L781.25 360.73 L781.5 365.71 L781.72 370.52 L781.92 375.08 L782.1 379.37 L782.27 383.31 L782.44 386.86 L782.6 389.98 L782.75 392.57" fill="none" stroke="#ffffff" stroke-width="2" />
<path d="M603.78 343.01 L604.8 340.69 L606.02 337.86 L607.4 334.63 L608.93 331.04 L610.59 327.13 L612.37 322.96 L614.25 318.59 L616.21 314.06 L618.24 309.44 L620.3 304.77 L622.4 300.12 L624.5 295.55 L626.59 291.1 L628.64 286.84 L630.63 282.83 L632.58 279.06 L634.56 275.27 L636.55 271.39 L638.52 267.51 L640.47 263.67 L642.4 259.88 L644.33 256.18 L646.25 252.57 L648.17 249.09 L650.07 245.77 L651.97 242.63 L653.85 239.7 L655.71 237.01 L657.53 234.59 L659.29 232.46 L660.96 230.66 L662.55 229.16 L664.15 227.85 L665.8 226.65 L667.48 225.57 L669.21 224.59 L671 223.69 L672.85 222.86 L674.76 222.09 L676.75 221.39 L678.8 220.74 L680.92 220.15 L683.1 219.6 L685.35 219.09 L687.64 218.63 L689.98 218.19 L692.36 217.78 L694.73 217.4 L697.04 217.05 L699.32 216.74 L701.56 216.49 L703.77 216.28 L705.95 216.14 L708.09 216.07 L710.18 216.07 L712.24 216.14 L714.25 216.3 L716.22 216.55 L718.15 216.89 L720.04 217.33 L721.9 217.88 L723.72 218.54 L725.52 219.33 L727.35 220.29 L729.31 221.48 L731.4 222.9 L733.55 224.5 L735.73 226.29 L737.93 228.24 L740.14 230.34 L742.33 232.59 L744.5 234.97 L746.63 237.47 L748.7 240.08 L750.71 242.8 L752.64 245.59 L754.49 248.47 L756.23 251.4 L757.87 254.39 L759.37 257.39 L760.76 260.48 L762.06 263.75 L763.3 267.21 L764.48 270.86 L765.58 274.66 L766.63 278.61 L767.61 282.67 L768.53 286.84 L769.4 291.09 L770.23 295.41 L771.01 299.79 L771.76 304.2 L772.47 308.63 L773.16 313.06 L773.84 317.48 L774.49 321.8 L775.09 326.12 L775.62 330.67 L776.11 335.47 L776.55 340.45 L776.94 345.54 L777.29 350.68 L777.61 355.83 L777.88 360.91 L778.13 365.88 L778.36 370.67 L778.56 375.23 L778.74 379.51 L778.91 383.46 L779.07 387.02 L779.23 390.17 L779.39 392.77" fill="none" stroke="#ffffff" stroke-width="1.3" />
<path d="M606.53 344.18 L607.56 341.85 L608.79 339.02 L610.18 335.78 L611.72 332.19 L613.39 328.28 L615.18 324.12 L617.07 319.76 L619.05 315.25 L621.08 310.64 L623.16 305.99 L625.27 301.37 L627.38 296.81 L629.48 292.4 L631.55 288.18 L633.55 284.21 L635.52 280.47 L637.53 276.69 L639.56 272.8 L641.56 268.93 L643.54 265.1 L645.51 261.34 L647.46 257.67 L649.4 254.11 L651.33 250.7 L653.24 247.45 L655.13 244.4 L656.99 241.58 L658.81 239.02 L660.57 236.74 L662.25 234.79 L663.81 233.18 L665.25 231.88 L666.68 230.77 L668.15 229.75 L669.65 228.82 L671.19 227.97 L672.79 227.19 L674.46 226.46 L676.2 225.78 L678.02 225.14 L679.91 224.54 L681.89 223.98 L683.94 223.46 L686.07 222.96 L688.26 222.49 L690.52 222.05 L692.83 221.63 L695.13 221.23 L697.37 220.86 L699.56 220.52 L701.7 220.24 L703.8 220 L705.86 219.82 L707.87 219.71 L709.83 219.65 L711.74 219.68 L713.6 219.77 L715.42 219.95 L717.18 220.2 L718.9 220.55 L720.59 221 L722.25 221.54 L723.88 222.21 L725.57 223.04 L727.42 224.12 L729.41 225.43 L731.48 226.94 L733.59 228.62 L735.73 230.48 L737.88 232.5 L740.02 234.66 L742.14 236.95 L744.22 239.37 L746.25 241.9 L748.21 244.52 L750.1 247.23 L751.9 250.02 L753.6 252.86 L755.19 255.75 L756.66 258.65 L758 261.62 L759.27 264.78 L760.48 268.15 L761.63 271.72 L762.72 275.45 L763.75 279.32 L764.72 283.33 L765.64 287.45 L766.5 291.66 L767.32 295.95 L768.1 300.29 L768.84 304.68 L769.56 309.09 L770.25 313.51 L770.92 317.92 L771.57 322.22 L772.16 326.49 L772.69 330.99 L773.17 335.75 L773.61 340.69 L774 345.75 L774.35 350.87 L774.66 356 L774.94 361.07 L775.19 366.02 L775.41 370.8 L775.61 375.36 L775.79 379.64 L775.96 383.59 L776.13 387.17 L776.29 390.34 L776.45 392.95" fill="none" stroke="#ffffff" stroke-width="1.2" />
<path d="M575.97 331.19 L576.89 328.93 L577.99 326.2 L579.26 323 L580.69 319.39 L582.26 315.43 L583.94 311.19 L585.72 306.71 L587.57 302.06 L589.48 297.28 L591.42 292.43 L593.39 287.56 L595.37 282.73 L597.34 277.98 L599.28 273.36 L601.18 268.92 L602.98 264.8 L604.63 260.99 L606.24 257.17 L607.86 253.26 L609.49 249.28 L611.16 245.23 L612.86 241.16 L614.6 237.06 L616.4 232.97 L618.28 228.89 L620.25 224.84 L622.33 220.83 L624.55 216.87 L626.94 212.97 L629.54 209.15 L632.4 205.43 L635.52 201.88 L638.82 198.62 L642.24 195.67 L645.77 193.02 L649.37 190.65 L653.03 188.55 L656.71 186.73 L660.39 185.15 L664.04 183.81 L667.66 182.68 L671.21 181.74 L674.69 180.97 L678.09 180.36 L681.39 179.87 L684.59 179.5 L687.67 179.23 L690.68 179.03 L693.75 178.89 L696.92 178.82 L700.16 178.84 L703.47 178.95 L706.83 179.18 L710.26 179.52 L713.73 180 L717.25 180.63 L720.79 181.42 L724.36 182.39 L727.93 183.55 L731.5 184.92 L735.05 186.5 L738.57 188.3 L742.02 190.33 L745.34 192.56 L748.46 194.9 L751.46 197.36 L754.41 199.96 L757.31 202.7 L760.15 205.57 L762.95 208.56 L765.69 211.69 L768.37 214.93 L770.98 218.28 L773.52 221.75 L775.99 225.32 L778.37 229 L780.65 232.77 L782.82 236.64 L784.88 240.59 L786.82 244.66 L788.64 248.89 L790.32 253.25 L791.85 257.68 L793.25 262.18 L794.54 266.74 L795.72 271.34 L796.81 275.98 L797.82 280.65 L798.76 285.34 L799.64 290.02 L800.47 294.7 L801.24 299.35 L801.98 303.97 L802.68 308.53 L803.36 313.03 L804.04 317.55 L804.69 322.35 L805.29 327.43 L805.82 332.66 L806.29 337.99 L806.7 343.38 L807.07 348.76 L807.39 354.11 L807.68 359.35 L807.93 364.44 L808.16 369.32 L808.36 373.94 L808.54 378.23 L808.71 382.14 L808.87 385.59 L809.02 388.51 L809.17 390.95" fill="none" stroke="#c8c838" stroke-width="0.9" />
<path d="M608.03 344.81 L609.06 342.48 L610.29 339.64 L611.69 336.4 L613.23 332.81 L614.9 328.91 L616.69 324.75 L618.59 320.39 L620.56 315.88 L622.6 311.28 L624.68 306.64 L626.78 302.02 L628.89 297.48 L630.99 293.07 L633.05 288.87 L635.05 284.92 L637.02 281.2 L639.04 277.41 L641.07 273.51 L643.08 269.64 L645.07 265.81 L647.04 262.06 L648.99 258.4 L650.93 254.86 L652.85 251.47 L654.75 248.25 L656.63 245.24 L658.47 242.46 L660.26 239.95 L661.99 237.74 L663.62 235.86 L665.11 234.33 L666.48 233.12 L667.82 232.09 L669.21 231.14 L670.62 230.28 L672.08 229.49 L673.6 228.76 L675.18 228.07 L676.84 227.43 L678.58 226.82 L680.41 226.24 L682.32 225.69 L684.32 225.18 L686.39 224.69 L688.54 224.23 L690.76 223.79 L693.04 223.37 L695.32 222.97 L697.52 222.6 L699.67 222.26 L701.76 221.97 L703.82 221.73 L705.82 221.55 L707.77 221.42 L709.66 221.36 L711.5 221.37 L713.29 221.45 L715.02 221.6 L716.7 221.83 L718.34 222.14 L719.94 222.55 L721.51 223.05 L723.06 223.66 L724.66 224.44 L726.44 225.47 L728.39 226.73 L730.4 228.2 L732.48 229.84 L734.58 231.66 L736.69 233.63 L738.8 235.75 L740.88 238.01 L742.93 240.39 L744.93 242.87 L746.87 245.45 L748.73 248.12 L750.5 250.86 L752.18 253.65 L753.74 256.49 L755.18 259.34 L756.5 262.25 L757.75 265.35 L758.94 268.67 L760.08 272.18 L761.16 275.87 L762.18 279.72 L763.14 283.69 L764.05 287.78 L764.91 291.97 L765.73 296.24 L766.5 300.57 L767.24 304.94 L767.96 309.34 L768.64 313.75 L769.32 318.16 L769.96 322.45 L770.55 326.7 L771.08 331.17 L771.56 335.9 L771.99 340.82 L772.38 345.87 L772.73 350.98 L773.04 356.09 L773.32 361.15 L773.57 366.1 L773.79 370.87 L773.99 375.43 L774.17 379.71 L774.35 383.66 L774.51 387.24 L774.67 390.43 L774.83 393.05" fill="none" stroke="#c8c838" stroke-width="0.9" />
<polygon points="733,178.5 741,178.5 741,190 743.5,190 738,200.5 732,192 734.5,191" fill="#1a2aff" stroke="none" stroke-width="1" />
<text x="699" y="222.5" font-size="9.5" fill="#c8c850" textLength="78" lengthAdjust="spacingAndGlyphs" transform="rotate(7 699 222.5)">1+5 7564.536</text>
<line x1="739" y1="190" x2="752" y2="180" stroke="#9a9a9a" stroke-width="0.8" />
<polyline points="668,70 707.5,130 721.5,165 729,237.5 723,300 622,461" fill="none" stroke="#4a4a4a" stroke-width="0.9" />
<polyline points="820,70 880,107.5 920,165 937.5,210 927.5,280 900,325 894,354 858,400" fill="none" stroke="#4a4a4a" stroke-width="0.9" />
<polyline points="1012.5,70 1030,110 1045,145 1052.5,172.5 1058,210" fill="none" stroke="#2030a0" stroke-width="1" />
<line x1="1051.7" y1="355.7" x2="1041.5" y2="386" stroke="#2030a0" stroke-width="0.9" />
<rect x="0" y="70" width="649" height="152" fill="#efe8d9"/>
<rect x="0" y="69.8" width="649" height="1.6" fill="#6a8aa6"/>
<rect x="0" y="71.3" width="649" height="2.3" fill="#a8cdf0"/>
<rect x="0" y="73.5" width="649" height="3.2" fill="#7890c8"/>
<rect x="0" y="70" width="2.5" height="152" fill="#7d9fd0"/>
<rect x="643.5" y="70" width="5.5" height="152" fill="#9db6da"/>
<rect x="645" y="72" width="2" height="148" fill="#7d9fd0"/>
<rect x="0" y="217.5" width="649" height="4.5" fill="#9db6da"/>
<rect x="0" y="218.5" width="649" height="2" fill="#6a8cc0"/>
<rect x="-1" y="70.7" width="7.6" height="11" fill="#f4f6fa" stroke="#4f7090" stroke-width="1.3" rx="2"/>
<path d="M0.5 74 h3.5 v3.5 h-3.5 Z M2.2 77.5 v2.6" fill="#222" stroke="#222" stroke-width="0.8" />
<rect x="2.5" y="76" width="426.5" height="42" fill="#efe8d9"/>
<rect x="426" y="76" width="2.5" height="43" fill="#7d9fd0"/>
<rect x="428.5" y="76" width="3" height="43" fill="#dfe6f0"/>
<rect x="431.5" y="76" width="2" height="43" fill="#7d9fd0"/>
<rect x="2" y="117" width="641" height="2.6" fill="#7d9fd0"/>
<rect x="2" y="119.6" width="641" height="1.2" fill="#dbe3ef"/>
<rect x="2.5" y="120.8" width="641" height="26" fill="#f3ecdf"/>
<rect x="107" y="146.8" width="537" height="1.7" fill="#9fb6d6"/>
<rect x="2" y="152.8" width="642" height="3.8" fill="#84a4d4"/>
<rect x="2" y="151.6" width="642" height="1.2" fill="#cdd9ea"/>
<path d="M2.5 153 V137 Q2.5 131.7 9 131.7 H99 Q103.5 131.7 105.5 136 L108.3 148.5 V153 Z" fill="#f1eadb" stroke="#5f7f98" stroke-width="1.3" />
<rect x="3.2" y="149" width="105.8" height="4.5" fill="#f1eadb"/>
<rect x="109.3" y="132.6" width="104.7" height="14.6" fill="#e9ecef" stroke="#5f7f98" stroke-width="1.5" rx="2.5"/>
<rect x="217" y="132.6" width="104.7" height="14.6" fill="#e9ecef" stroke="#5f7f98" stroke-width="1.5" rx="2.5"/>
<text x="37.7" y="145.6" font-size="12" fill="#222" textLength="33.7" lengthAdjust="spacingAndGlyphs">BERMA</text>
<text x="133.7" y="145.2" font-size="12" fill="#222" textLength="57.6" lengthAdjust="spacingAndGlyphs">TERRAPLÉN</text>
<text x="255" y="145.2" font-size="12" fill="#222" textLength="29.2" lengthAdjust="spacingAndGlyphs">MURO</text>
<rect x="2.5" y="157.3" width="319.5" height="59.7" fill="#efe8d9" stroke="#7d9fd0" stroke-width="2"/>
<rect x="324.5" y="157.3" width="319" height="59.7" fill="#efe8d9" stroke="#7d9fd0" stroke-width="2"/>
<rect x="321.5" y="156.5" width="3" height="61" fill="#a9c0e4"/>
<text x="6.2" y="174" font-size="10.5" fill="#222">I</text>
<text x="10.3" y="93.5" font-size="12" fill="#262626" textLength="56.7" lengthAdjust="spacingAndGlyphs">TERRAPLÉN</text>
<rect x="75.5" y="81" width="12" height="9.5" fill="#f4f4fa" stroke="#4a4a9a" stroke-width="1" rx="1"/>
<rect x="79.5" y="84" width="4.5" height="5" fill="#1a4af0"/>
<polygon points="76.5,89 86.5,89 81.5,95.5" fill="#1a4af0" stroke="none" stroke-width="1" />
<rect x="94.5" y="80" width="19.5" height="17.5" fill="#1f8fe8"/>
<polygon points="94.5,93 114,83.5 114,95 94.5,95" fill="#20c020" stroke="none" stroke-width="1" />
<rect x="94.5" y="94.5" width="19.5" height="3" fill="#b05a10"/>
<ellipse cx="101" cy="85.3" rx="4.6" ry="4.4" fill="#f6faff"/>
<text x="99.4" y="89.3" font-size="10" fill="#0a1440" font-weight="bold" style="font-family:Liberation Serif,serif">i</text>
<rect x="117" y="80" width="18" height="17.5" fill="#1f8fe8"/>
<polygon points="123.5,97.5 126,88 130,88 133,97.5" fill="#9a9a9a" stroke="none" stroke-width="1" />
<ellipse cx="123.3" cy="85.3" rx="4.6" ry="4.4" fill="#f6faff"/>
<text x="121.7" y="89.3" font-size="10" fill="#0a1440" font-weight="bold" style="font-family:Liberation Serif,serif">i</text>
<text x="144.5" y="94" font-size="12" fill="#262626" textLength="19.2" lengthAdjust="spacingAndGlyphs">EJE:</text>
<rect x="171" y="81" width="35" height="16.5" fill="#ffffff" stroke="#a9c3e3" stroke-width="1.2" rx="1"/>
<text x="176" y="94" font-size="11.5" fill="#262626">1</text>
<rect x="208" y="80.5" width="17.5" height="17.5" fill="#e6ecf6" stroke="#b5c8e4" stroke-width="1"/>
<path d="M213.3 82.5 V94.8 L216.3 92 L218.5 96.6 L220.6 95.6 L218.4 91.2 L222.3 91 Z" fill="#111" stroke="#111" stroke-width="0.6" />
<rect x="227" y="81" width="194" height="16.5" fill="#ffffff" stroke="#a9c3e3" stroke-width="1.2" rx="1"/>
<text x="231" y="94" font-size="12" fill="#262626" textLength="172" lengthAdjust="spacingAndGlyphs">1 EJE DE CARRETERA TAMBO - SAN...</text>
<rect x="406" y="82" width="14" height="14.5" fill="#cfe2fa" stroke="#a9c3e3" stroke-width="0.8"/>
<polyline points="409.5,87 413,91 416.5,87" fill="none" stroke="#2a4a8a" stroke-width="1.8" />
<rect x="7" y="99.5" width="86" height="15.5" fill="#f5f1e8" stroke="#e2dccd" stroke-width="1" rx="2"/>
<text x="12" y="111.5" font-size="12" fill="#262626" textLength="76.7" lengthAdjust="spacingAndGlyphs">CALZADA ÚNICA</text>
<text x="99.5" y="111.5" font-size="12" fill="#262626" textLength="102.5" lengthAdjust="spacingAndGlyphs">IZQUIERDA/DERECHA</text>
<rect x="207.5" y="99" width="78" height="16.5" fill="#eef0f1" stroke="#3f5f7f" stroke-width="1.2" rx="2.5"/>
<text x="212" y="111.5" font-size="12" fill="#262626" textLength="56.7" lengthAdjust="spacingAndGlyphs">SIMÉTRICAS</text>
<text x="276" y="111" font-size="12" fill="#111" font-weight="bold" textLength="8" lengthAdjust="spacingAndGlyphs">...</text>
<text x="440" y="93.6" font-size="12" fill="#262626" textLength="30.5" lengthAdjust="spacingAndGlyphs">S.TIPO</text>
<rect x="508" y="81.3" width="64.5" height="15.7" fill="#eef0f1" stroke="#3f5f7f" stroke-width="1.2" rx="2.5"/>
<text x="520.5" y="93.2" font-size="12" fill="#262626" textLength="38.5" lengthAdjust="spacingAndGlyphs">Izq&lt;=Der</text>
<rect x="575" y="81.3" width="64.5" height="15.7" fill="#eef0f1" stroke="#3f5f7f" stroke-width="1.2" rx="2.5"/>
<text x="587.5" y="93.2" font-size="12" fill="#262626" textLength="38.5" lengthAdjust="spacingAndGlyphs">Izq=&gt;Der</text>
<rect x="436" y="99" width="69" height="16" fill="#eef0f1" stroke="#3f5f7f" stroke-width="1.2" rx="2.5"/>
<text x="450" y="111.3" font-size="12" fill="#262626" textLength="40.5" lengthAdjust="spacingAndGlyphs">Copiar de</text>
<rect x="508" y="99" width="19.5" height="16" fill="#eef0f1" stroke="#3f5f7f" stroke-width="1.2" rx="2.5"/>
<text x="517.7" y="110.5" font-size="12" fill="#262626" text-anchor="middle">-</text>
<rect x="530" y="99" width="87" height="16" fill="#eef0f1" stroke="#3f5f7f" stroke-width="1.2" rx="2.5"/>
<text x="555" y="111.3" font-size="12" fill="#262626" textLength="37.5" lengthAdjust="spacingAndGlyphs">Dato 1/1</text>
<rect x="619.5" y="99" width="20" height="16" fill="#eef0f1" stroke="#3f5f7f" stroke-width="1.2" rx="2.5"/>
<text x="629.5" y="111" font-size="11" fill="#262626" font-weight="bold" text-anchor="middle">+</text>
<text x="329" y="173.8" font-size="12" fill="#262626" textLength="5.7" lengthAdjust="spacingAndGlyphs">D</text>
<text x="350.6" y="173.8" font-size="12" fill="#262626" textLength="23.2" lengthAdjust="spacingAndGlyphs">TIPO:</text>
<rect x="378" y="162" width="69" height="15.8" fill="#eef0f1" stroke="#3f5f7f" stroke-width="1.2" rx="2.5"/>
<text x="383" y="173.8" font-size="12" fill="#262626" textLength="49" lengthAdjust="spacingAndGlyphs">No cóncava</text>
<text x="436" y="173.3" font-size="12" fill="#111" font-weight="bold" textLength="8.5" lengthAdjust="spacingAndGlyphs">...</text>
<text x="458" y="173.8" font-size="12" fill="#262626" textLength="32.6" lengthAdjust="spacingAndGlyphs">Escalón</text>
<rect x="493.4" y="162" width="44.2" height="15.5" fill="#ffffff" stroke="#a9c3e3" stroke-width="1.2" rx="1"/>
<text x="498.5" y="173.8" font-size="12" fill="#262626" textLength="24.5" lengthAdjust="spacingAndGlyphs">0.075</text>
<text x="552.4" y="173.8" font-size="12" fill="#262626" textLength="14.1" lengthAdjust="spacingAndGlyphs">TS:</text>
<rect x="574.2" y="162" width="43.8" height="15.5" fill="#ffffff" stroke="#a9c3e3" stroke-width="1.2" rx="1"/>
<text x="579.3" y="173.8" font-size="12" fill="#262626" textLength="24.7" lengthAdjust="spacingAndGlyphs">0.000</text>
<text x="332.7" y="191.7" font-size="12" fill="#262626" textLength="14.3" lengthAdjust="spacingAndGlyphs">BT:</text>
<rect x="354" y="179.8" width="63" height="15.5" fill="#ffffff" stroke="#a9c3e3" stroke-width="1.2" rx="1"/>
<text x="359.5" y="191.7" font-size="12" fill="#262626" textLength="24.5" lengthAdjust="spacingAndGlyphs">0.500</text>
<text x="425.4" y="191.7" font-size="12" fill="#262626" textLength="20.6" lengthAdjust="spacingAndGlyphs">ZBT:</text>
<rect x="452.6" y="179.8" width="62.4" height="15.5" fill="#ffffff" stroke="#a9c3e3" stroke-width="1.2" rx="1"/>
<text x="457.5" y="191.7" font-size="12" fill="#262626" textLength="28" lengthAdjust="spacingAndGlyphs">-1.000</text>
<text x="520.6" y="191.7" font-size="12" fill="#262626" textLength="14.2" lengthAdjust="spacingAndGlyphs">TP:</text>
<rect x="542.4" y="179.8" width="62.4" height="15.5" fill="#ffffff" stroke="#a9c3e3" stroke-width="1.2" rx="1"/>
<text x="548" y="191.7" font-size="12" fill="#262626" textLength="24.5" lengthAdjust="spacingAndGlyphs">0.000</text>
<rect x="614" y="179.8" width="16.3" height="15.5" fill="#f2f3f5" stroke="#4a6a9a" stroke-width="1.3" rx="1"/>
<text x="453.2" y="210" font-size="12" fill="#262626" textLength="85.6" lengthAdjust="spacingAndGlyphs">Cuña de afinamiento</text>
<rect x="551.8" y="198.2" width="43.1" height="15.6" fill="#ffffff" stroke="#a9c3e3" stroke-width="1.2" rx="1"/>
<text x="557" y="210" font-size="12" fill="#262626" textLength="24.5" lengthAdjust="spacingAndGlyphs">0.000</text>
<rect x="596.3" y="198.2" width="43.9" height="15.6" fill="#ffffff" stroke="#a9c3e3" stroke-width="1.2" rx="1"/>
<text x="602" y="210" font-size="12" fill="#262626" textLength="24.5" lengthAdjust="spacingAndGlyphs">0.600</text>
<rect x="0" y="221.5" width="620.5" height="376" fill="#8fa6c6"/>
<rect x="617" y="221.5" width="3.5" height="374" fill="#a4aebc"/>
<defs><clipPath id="dclip"><rect x="2" y="223" width="614.5" height="367.3"/></clipPath></defs>
<g clip-path="url(#dclip)" font-weight="bold">
<rect x="2" y="223" width="614.5" height="367.3" fill="#00e4ff"/>
<polygon points="2,222 84.5,222 184,289.6 200,289.6 252,470 2,426" fill="#ff35ff" stroke="none" stroke-width="1" />
<polygon points="2,426 237,465 370.8,446 617,489.3 617,592 2,592" fill="#800000" stroke="none" stroke-width="1" />
<polygon points="2,426 237,465 247,498 154,498 154,540 92,540" fill="#660000" stroke="none" stroke-width="1" />
<polygon points="370.8,446 578.5,482.5 533.8,515.4 497,540 462,540 462,497.8 410.8,497.8" fill="#660000" stroke="none" stroke-width="1" />
<polygon points="578.5,482.5 617,489.3 617,529.3 533.8,515.4" fill="#00b000" stroke="none" stroke-width="1" />
<polygon points="174.5,249 217.8,249 410.8,497.8 462,497.8 462,540.6 415,540.6 401.5,570.8 360,570.8 344.6,540.6 154,540.6 154,498.5 246.8,498.5" fill="#9a9a9a" stroke="none" stroke-width="1" />
<line x1="0" y1="383" x2="617" y2="489.3" stroke="#f2e8e8" stroke-width="0.9" />
<line x1="2" y1="426" x2="617" y2="529.3" stroke="#f6d8d8" stroke-width="0.9" stroke-dasharray="3 2"/>
<line x1="237" y1="465" x2="617" y2="529.3" stroke="#d8c8c8" stroke-width="0.8" />
<polyline points="238.5,466 252,515.4 320,506 407.7,498.5" fill="none" stroke="#d4d4d4" stroke-width="0.9" />
<line x1="3" y1="426" x2="92" y2="540" stroke="#e8c8b8" stroke-width="0.9" />
<polyline points="31.7,431 31.7,498 154,498" fill="none" stroke="#f0d8c8" stroke-width="0.9" />
<line x1="92" y1="540" x2="154" y2="540" stroke="#f0e0e0" stroke-width="0.9" />
<polyline points="154,498.5 154,540.6 344.6,540.6 360,570.8 401.5,570.8 415,540.6 462,540.6" fill="none" stroke="#dccccc" stroke-width="0.8" />
<line x1="104.6" y1="443" x2="150.8" y2="492.3" stroke="#f0e0e0" stroke-width="0.9" stroke-dasharray="6 5"/>
<polyline points="462,540 497,540 533.8,515.4" fill="none" stroke="#f0e0e0" stroke-width="0.9" />
<rect x="93.5" y="269.7" width="23.5" height="67.3" fill="none" stroke="#ffc8dc" stroke-width="1"/>
<rect x="31.5" y="337" width="108.2" height="16.6" fill="none" stroke="#ffc8dc" stroke-width="1"/>
<line x1="55.5" y1="259.5" x2="93.5" y2="278.5" stroke="#ffc8dc" stroke-width="1" />
<line x1="48" y1="280.8" x2="93.5" y2="280.8" stroke="#ff7090" stroke-width="1" />
<line x1="48" y1="301" x2="93.5" y2="301" stroke="#ff7090" stroke-width="1" />
<line x1="93.5" y1="302" x2="55.5" y2="337" stroke="#ffc8dc" stroke-width="1" />
<polygon points="181,324.7 182.7,380.8 199.7,380.8" fill="none" stroke="#ff7090" stroke-width="1" />
<line x1="215" y1="248.4" x2="266" y2="248.4" stroke="#1c1ce6" stroke-width="1" />
<line x1="255" y1="248.4" x2="255" y2="289.6" stroke="#1c1ce6" stroke-width="1" />
<polygon points="255,289.6 252,281.6 258,281.6" fill="#1c1ce6" stroke="none" stroke-width="1" />
<polygon points="255,248.4 258,256.4 252,256.4" fill="#1c1ce6" stroke="none" stroke-width="1" />
<line x1="184" y1="289.6" x2="437" y2="289.6" stroke="#1c1ce6" stroke-width="1" />
<line x1="186" y1="289.6" x2="236" y2="289.6" stroke="#1c1ce6" stroke-width="1" />
<polygon points="236,289.6 230,291.8 230,287.4" fill="#1c1ce6" stroke="none" stroke-width="1" />
<polygon points="186,289.6 192,287.4 192,291.8" fill="#1c1ce6" stroke="none" stroke-width="1" />
<line x1="431" y1="291" x2="431" y2="497.8" stroke="#1c1ce6" stroke-width="1" />
<polygon points="431,497.8 427.8,489.3 434.2,489.3" fill="#1c1ce6" stroke="none" stroke-width="1" />
<polygon points="431,291 434.2,299.5 427.8,299.5" fill="#1c1ce6" stroke="none" stroke-width="1" />
<line x1="248.6" y1="446" x2="370.8" y2="446" stroke="#1c1ce6" stroke-width="1" />
<line x1="267" y1="446" x2="267" y2="497" stroke="#1c1ce6" stroke-width="1" />
<polygon points="267,497 264,489 270,489" fill="#1c1ce6" stroke="none" stroke-width="1" />
<polygon points="267,446 270,454 264,454" fill="#1c1ce6" stroke="none" stroke-width="1" />
<line x1="267" y1="499" x2="267" y2="539.5" stroke="#1c1ce6" stroke-width="1" />
<polygon points="267,539.5 264,531.5 270,531.5" fill="#1c1ce6" stroke="none" stroke-width="1" />
<polygon points="267,499 270,507 264,507" fill="#1c1ce6" stroke="none" stroke-width="1" />
<line x1="247" y1="497.8" x2="462" y2="497.8" stroke="#1c1ce6" stroke-width="1" />
<line x1="247.7" y1="487.7" x2="247.7" y2="540.6" stroke="#1c1ce6" stroke-width="1" />
<line x1="411.4" y1="497.8" x2="411.4" y2="540" stroke="#1c1ce6" stroke-width="1" />
<line x1="462" y1="497.8" x2="462" y2="540" stroke="#1c1ce6" stroke-width="1" />
<line x1="157" y1="529" x2="246" y2="529" stroke="#1c1ce6" stroke-width="1" />
<polygon points="246,529 237,531.8 237,526.2" fill="#1c1ce6" stroke="none" stroke-width="1" />
<polygon points="157,529 166,526.2 166,531.8" fill="#1c1ce6" stroke="none" stroke-width="1" />
<line x1="412" y1="529.8" x2="461.5" y2="529.8" stroke="#1c1ce6" stroke-width="1" />
<polygon points="461.5,529.8 452.5,532.6 452.5,527" fill="#1c1ce6" stroke="none" stroke-width="1" />
<polygon points="412,529.8 421,527 421,532.6" fill="#1c1ce6" stroke="none" stroke-width="1" />
<line x1="392" y1="506" x2="346" y2="510" stroke="#1c1ce6" stroke-width="1" />
<polygon points="346,510 352.78,507.2 353.16,511.59" fill="#1c1ce6" stroke="none" stroke-width="1" />
<polygon points="300.4,343.8 343,343.8 342,395" fill="none" stroke="#1a50ff" stroke-width="1.2" />
<line x1="32" y1="491.7" x2="246" y2="491.7" stroke="#e08a1a" stroke-width="1" />
<polygon points="246,491.7 236.5,495.1 236.5,488.3" fill="#ffe61a" stroke="none" stroke-width="1" />
<polygon points="32,491.7 41.5,488.3 41.5,495.1" fill="#ffe61a" stroke="none" stroke-width="1" />
<line x1="462" y1="463" x2="462" y2="497.8" stroke="#e08a1a" stroke-width="1" />
<polygon points="462,497.8 457.8,488.8 466.2,488.8" fill="#ffe61a" stroke="none" stroke-width="1" />
<polygon points="462,463 466.2,472 457.8,472" fill="#ffe61a" stroke="none" stroke-width="1" />
<polygon points="55.4,511.4 55.4,539 80,539" fill="none" stroke="#e08a1a" stroke-width="1.1" />
<polygon points="506,540 533.8,540 533.8,521" fill="none" stroke="#e08a1a" stroke-width="1.1" />
<line x1="89" y1="549" x2="161.5" y2="549" stroke="#18a818" stroke-width="1" />
<line x1="92" y1="540" x2="92" y2="553" stroke="#18a818" stroke-width="1" />
<line x1="154" y1="540" x2="154" y2="553" stroke="#18a818" stroke-width="1" />
<line x1="344" y1="540.6" x2="344" y2="577" stroke="#18a818" stroke-width="1" />
<line x1="417.8" y1="538.5" x2="417.8" y2="577" stroke="#18a818" stroke-width="1" />
<line x1="336" y1="573.2" x2="472" y2="573.2" stroke="#18a818" stroke-width="1" />
<line x1="360" y1="570" x2="360" y2="577" stroke="#18a818" stroke-width="1" />
<line x1="401.5" y1="570" x2="401.5" y2="577" stroke="#18a818" stroke-width="1" />
<line x1="462" y1="540" x2="462" y2="577" stroke="#18a818" stroke-width="1" />
<line x1="457" y1="552.3" x2="504.6" y2="552.3" stroke="#18a818" stroke-width="1" />
<line x1="497.8" y1="540" x2="497.8" y2="555" stroke="#18a818" stroke-width="1" />
<text x="14" y="248.6" font-size="12.5" fill="#ffffff" textLength="81" lengthAdjust="spacingAndGlyphs">Terraplen</text>
<text x="39.5" y="296.6" font-size="16" fill="#ffffff" textLength="42.5" lengthAdjust="spacingAndGlyphs">Hc2</text>
<text x="164" y="359.9" font-size="16.5" fill="#ffffff" textLength="8.5" lengthAdjust="spacingAndGlyphs">1</text>
<text x="118" y="395.4" font-size="16" fill="#ffffff" textLength="86.6" lengthAdjust="spacingAndGlyphs">Trasdos</text>
<text x="191.5" y="312" font-size="17" fill="#111" textLength="66.5" lengthAdjust="spacingAndGlyphs">Ancho</text>
<text x="263" y="276" font-size="17" fill="#111" textLength="28" lengthAdjust="spacingAndGlyphs">Hc</text>
<text x="293.5" y="339" font-size="17" fill="#111" textLength="56.1" lengthAdjust="spacingAndGlyphs">Talud</text>
<text x="352.8" y="369.2" font-size="16.5" fill="#111" textLength="8.2" lengthAdjust="spacingAndGlyphs">1</text>
<text x="380.7" y="382" font-size="17" fill="#111" textLength="41.6" lengthAdjust="spacingAndGlyphs">Alto</text>
<text x="277" y="469" font-size="17" fill="#111" textLength="52" lengthAdjust="spacingAndGlyphs">Prof.</text>
<text x="283" y="524.6" font-size="16" fill="#111" textLength="26" lengthAdjust="spacingAndGlyphs">Hz</text>
<text x="186" y="524.6" font-size="16" fill="#111" textLength="21" lengthAdjust="spacingAndGlyphs">Ai</text>
<text x="421.5" y="524.6" font-size="16" fill="#111" textLength="28.3" lengthAdjust="spacingAndGlyphs">Ae</text>
<text x="363" y="524.5" font-size="13" fill="#111" textLength="37" lengthAdjust="spacingAndGlyphs" transform="rotate(-7 363 524.5)">Ps%</text>
<text x="78.5" y="466" font-size="15" fill="#ffffff" textLength="36.5" lengthAdjust="spacingAndGlyphs">B&lt;0</text>
<text x="78.5" y="491" font-size="16" fill="#ffffff" textLength="20" lengthAdjust="spacingAndGlyphs">Di</text>
<text x="158" y="474.8" font-size="13" fill="#ffffff" textLength="63" lengthAdjust="spacingAndGlyphs">Relleno</text>
<text x="36.5" y="531.9" font-size="16.5" fill="#ffffff" textLength="9" lengthAdjust="spacingAndGlyphs">1</text>
<text x="60" y="555.4" font-size="16" fill="#ffffff" textLength="18.5" lengthAdjust="spacingAndGlyphs">Ti</text>
<text x="112" y="567.7" font-size="16" fill="#ffffff" textLength="20" lengthAdjust="spacingAndGlyphs">Bi</text>
<text x="21" y="579.4" font-size="13" fill="#ffffff" textLength="67.6" lengthAdjust="spacingAndGlyphs">Terreno</text>
<text x="422.5" y="564.6" font-size="16" fill="#ffffff" textLength="22.5" lengthAdjust="spacingAndGlyphs">Ht</text>
<text x="469" y="567.7" font-size="16" fill="#ffffff" textLength="28" lengthAdjust="spacingAndGlyphs">Be</text>
<text x="337" y="588.3" font-size="14" fill="#ffffff" textLength="20.5" lengthAdjust="spacingAndGlyphs">d3</text>
<text x="369" y="588.3" font-size="14" fill="#ffffff" textLength="21" lengthAdjust="spacingAndGlyphs">d2</text>
<text x="402.5" y="588.3" font-size="14" fill="#ffffff" textLength="16" lengthAdjust="spacingAndGlyphs">d1</text>
<text x="431.7" y="588.3" font-size="14" fill="#ffffff" textLength="20.6" lengthAdjust="spacingAndGlyphs">d0</text>
<text x="513.8" y="556.3" font-size="16" fill="#ffffff" textLength="25.6" lengthAdjust="spacingAndGlyphs">Te</text>
<text x="540.5" y="535.6" font-size="16.5" fill="#ffffff" textLength="8" lengthAdjust="spacingAndGlyphs">1</text>
<text x="501" y="526" font-size="13" fill="#ffffff" textLength="59" lengthAdjust="spacingAndGlyphs" transform="rotate(-32 501 526)">Relleno</text>
<text x="547.7" y="518" font-size="13" fill="#111" textLength="66.1" lengthAdjust="spacingAndGlyphs" transform="rotate(3 547.7 518)">Vegetal</text>
<text x="487.7" y="487.7" font-size="17" fill="#ffffff" textLength="50.8" lengthAdjust="spacingAndGlyphs">Prof.</text>
<rect x="470" y="476.3" width="14.6" height="10.5" fill="#ffffff"/>
<text x="472.3" y="485.6" font-size="13" fill="#111" textLength="10" lengthAdjust="spacingAndGlyphs">v</text>
<rect x="297" y="222" width="149.5" height="62.6" fill="#8a0600"/>
<polygon points="317,222 421.7,222 382,252 333.4,244.7" fill="#9a9a9a" stroke="none" stroke-width="1" />
<line x1="297" y1="238.5" x2="446.5" y2="264" stroke="#f0d8d0" stroke-width="0.9" />
<line x1="332.5" y1="224.4" x2="445.8" y2="243.5" stroke="#e8e0e0" stroke-width="0.9" />
<polyline points="333.4,244.7 339.6,252.7 380.6,252.7" fill="none" stroke="#f0e0e0" stroke-width="0.9" />
<line x1="438.2" y1="219" x2="438.2" y2="238" stroke="#e08a1a" stroke-width="1" />
<polygon points="438.2,238 434.8,231.5 441.6,231.5" fill="#ffe61a" stroke="none" stroke-width="1" />
<polygon points="438.2,219 441.6,225.5 434.8,225.5" fill="#ffe61a" stroke="none" stroke-width="1" />
<line x1="438.2" y1="242" x2="438.2" y2="260.5" stroke="#e08a1a" stroke-width="1" />
<polygon points="438.2,260.5 434.8,254 441.6,254" fill="#ffe61a" stroke="none" stroke-width="1" />
<polygon points="438.2,242 441.6,248.5 434.8,248.5" fill="#ffe61a" stroke="none" stroke-width="1" />
<text x="302.7" y="235.7" font-size="9" fill="#ffffff" textLength="12.1" lengthAdjust="spacingAndGlyphs">TI</text>
<text x="378.5" y="228.7" font-size="10" fill="#111" textLength="31.9" lengthAdjust="spacingAndGlyphs">Talud</text>
<text x="411" y="235.7" font-size="9" fill="#ffffff" textLength="20.6" lengthAdjust="spacingAndGlyphs">-Pr</text>
<text x="339" y="242.5" font-size="7" fill="#111" textLength="21.8" lengthAdjust="spacingAndGlyphs" transform="rotate(9 339 242.5)">Ps&gt;o</text>
<text x="370.7" y="245" font-size="9" fill="#111" textLength="15.6" lengthAdjust="spacingAndGlyphs">Te</text>
<text x="408.3" y="252.7" font-size="9" fill="#ffffff" textLength="14.7" lengthAdjust="spacingAndGlyphs">Hz</text>
<text x="353.7" y="263.3" font-size="9" fill="#ffffff" textLength="9.9" lengthAdjust="spacingAndGlyphs">AI</text>
<text x="302" y="274" font-size="9" fill="#ffffff" textLength="94.2" lengthAdjust="spacingAndGlyphs">Ancho=Alto=0</text>
<text x="302" y="283.9" font-size="9" fill="#ffffff" textLength="56" lengthAdjust="spacingAndGlyphs">Prof &lt; 0</text>
<rect x="447.4" y="222" width="170" height="98.9" fill="#880600"/>
<rect x="447.4" y="222" width="170" height="27.3" fill="#00e4ff"/>
<polygon points="447.4,222 457,222 467.2,249.3 447.4,249.3" fill="#ff35ff" stroke="none" stroke-width="1" />
<polygon points="457,222 471,222 494.3,281 481,281" fill="#08cc10" stroke="none" stroke-width="1" />
<polygon points="518,249.3 585,249.3 576.6,281 538.7,281" fill="#640000" stroke="none" stroke-width="1" />
<polygon points="471,222 498.2,222 538.7,280.7 570.8,280.7 571.7,301 510,311.8 494.3,281" fill="#9a9a9a" stroke="none" stroke-width="1" />
<line x1="447.4" y1="249.3" x2="617" y2="249.3" stroke="#f6e6e6" stroke-width="1" />
<line x1="447.4" y1="280.9" x2="617" y2="280.9" stroke="#f6e6e6" stroke-width="1" />
<line x1="585.7" y1="250" x2="570.8" y2="300.3" stroke="#f0dada" stroke-width="0.9" />
<line x1="538.7" y1="262.4" x2="538.7" y2="281" stroke="#e08a1a" stroke-width="1" />
<line x1="570.8" y1="262.4" x2="570.8" y2="301" stroke="#e08a1a" stroke-width="1" />
<line x1="539.5" y1="274" x2="570" y2="274" stroke="#e08a1a" stroke-width="1" />
<polygon points="570,274 563,277 563,271" fill="#ffe61a" stroke="none" stroke-width="1" />
<polygon points="539.5,274 546.5,271 546.5,277" fill="#ffe61a" stroke="none" stroke-width="1" />
<line x1="593.9" y1="249.6" x2="593.9" y2="280.6" stroke="#e08a1a" stroke-width="1" />
<polygon points="593.9,280.6 589.3,271.6 598.5,271.6" fill="#ffe61a" stroke="none" stroke-width="1" />
<polygon points="593.9,249.6 598.5,258.6 589.3,258.6" fill="#ffe61a" stroke="none" stroke-width="1" />
<line x1="577.4" y1="281.5" x2="577.4" y2="300.8" stroke="#e08a1a" stroke-width="1" />
<polygon points="577.4,300.8 573.4,292.8 581.4,292.8" fill="#ffe61a" stroke="none" stroke-width="1" />
<polygon points="577.4,281.5 581.4,289.5 573.4,289.5" fill="#ffe61a" stroke="none" stroke-width="1" />
<line x1="561.8" y1="297.8" x2="514" y2="304.9" stroke="#1c1ce6" stroke-width="1" />
<polygon points="514,304.9 521.56,301.35 522.27,306.1" fill="#1c1ce6" stroke="none" stroke-width="1" />
<text x="565" y="246.8" font-size="15" fill="#111" textLength="49.5" lengthAdjust="spacingAndGlyphs">Prof.</text>
<text x="541.2" y="263.3" font-size="15" fill="#ffffff" textLength="27.2" lengthAdjust="spacingAndGlyphs">Ae</text>
<text x="584.8" y="298.6" font-size="14" fill="#ffffff" textLength="24.7" lengthAdjust="spacingAndGlyphs">Hz</text>
<text x="527.5" y="303" font-size="12" fill="#111" textLength="35.9" lengthAdjust="spacingAndGlyphs" transform="rotate(-11 527.5 303)">Ps%</text>
<rect x="447.4" y="320.4" width="170" height="1.2" fill="#b8e4ee"/>
<rect x="447.4" y="321.4" width="170" height="113" fill="#00e4ff"/>
<polygon points="447.4,372.4 617,395 617,434.4 447.4,434.4" fill="#880600" stroke="none" stroke-width="1" />
<polygon points="447.4,321.4 480.3,321.4 511.3,354.6 480.3,377.7 447.4,372.4" fill="#ff35ff" stroke="none" stroke-width="1" />
<polygon points="511.3,354.6 562,354.6 590,391.5 571.3,414.6 508.5,414.6 480.3,377.2" fill="#9a9a9a" stroke="none" stroke-width="1" />
<line x1="447.4" y1="372.4" x2="617" y2="395" stroke="#f4ecec" stroke-width="0.9" stroke-dasharray="4 1.5"/>
<line x1="511.3" y1="354.6" x2="543.2" y2="385.5" stroke="#e8e8e8" stroke-width="0.8" />
<polyline points="480.3,377.2 508.5,414.6 571.3,414.6 590,391.5" fill="none" stroke="#d8d0d0" stroke-width="0.7" />
<line x1="543.6" y1="385.5" x2="543.6" y2="414.6" stroke="#e08a1a" stroke-width="1" />
<polygon points="543.6,414.6 539,405.6 548.2,405.6" fill="#ffe61a" stroke="none" stroke-width="1" />
<polygon points="543.6,385.5 548.2,394.5 539,394.5" fill="#ffe61a" stroke="none" stroke-width="1" />
<line x1="545" y1="403.4" x2="571.3" y2="403.4" stroke="#e08a1a" stroke-width="1" />
<polygon points="571.3,403.4 564.8,406.4 564.8,400.4" fill="#ffe61a" stroke="none" stroke-width="1" />
<polygon points="545,403.4 551.5,400.4 551.5,406.4" fill="#ffe61a" stroke="none" stroke-width="1" />
<line x1="571.3" y1="400" x2="571.3" y2="414.6" stroke="#ffe61a" stroke-width="1.1" />
<text x="467.2" y="334.9" font-size="11.5" fill="#111" textLength="126.6" lengthAdjust="spacingAndGlyphs">Ancho=Alto=0</text>
<text x="455" y="363" font-size="12.5" fill="#ffffff" textLength="49.7" lengthAdjust="spacingAndGlyphs">Trasd</text>
<text x="566.6" y="364" font-size="12.5" fill="#111" textLength="45.1" lengthAdjust="spacingAndGlyphs">Talud</text>
<text x="473.8" y="404.7" font-size="12" fill="#ffffff" textLength="15" lengthAdjust="spacingAndGlyphs">TI</text>
<text x="516" y="401.5" font-size="11.5" fill="#111" textLength="20.6" lengthAdjust="spacingAndGlyphs">Hz</text>
<text x="551.6" y="399.6" font-size="11.5" fill="#111" textLength="22.4" lengthAdjust="spacingAndGlyphs">Ae</text>
<text x="588.2" y="409" font-size="11.5" fill="#ffffff" textLength="18.8" lengthAdjust="spacingAndGlyphs">Te</text>
<text x="531" y="428.7" font-size="13" fill="#ffffff" textLength="17.8" lengthAdjust="spacingAndGlyphs">Ai</text>
</g>
<rect x="1051.5" y="77.5" width="133" height="274.5" fill="#dde3f2" stroke="#c5cee4" stroke-width="1"/>
<rect x="1052" y="78" width="132" height="20" fill="#e3e8f6"/>
<path d="M1055 80.5 h5 v3.5 h-5 Z M1057.5 84 v3" fill="none" stroke="#334" stroke-width="0.9" />
<text x="1084" y="93.8" font-size="12.5" fill="#15203a" font-weight="bold" textLength="68" lengthAdjust="spacingAndGlyphs">TERRAPLÉN</text>
<rect x="1159.5" y="84" width="19.5" height="11.5" fill="#f4f6fa" stroke="#2f4f6f" stroke-width="1.2" rx="2"/>
<polygon points="1164.5,92.5 1174,92.5 1169.2,86.8" fill="#111" stroke="none" stroke-width="1" />
<rect x="1056" y="99.9" width="123.8" height="14.6" fill="#efe8d8" stroke="#fbf8f0" stroke-width="1"/>
<rect x="1056" y="113.8" width="123.8" height="0.9" fill="#d3ccbc"/>
<text x="1109.9" y="111.6" font-size="13" fill="#222" textLength="16" lengthAdjust="spacingAndGlyphs">Fin</text>
<rect x="1056" y="117.77" width="39.4" height="14.6" fill="#efe8d8" stroke="#fbf8f0" stroke-width="1"/>
<rect x="1056" y="131.67" width="39.4" height="0.9" fill="#d3ccbc"/>
<text x="1065.2" y="129.47" font-size="13" fill="#222" textLength="21" lengthAdjust="spacingAndGlyphs">Pan</text>
<rect x="1097.6" y="117.77" width="39.4" height="14.6" fill="#efe8d8" stroke="#fbf8f0" stroke-width="1"/>
<rect x="1097.6" y="131.67" width="39.4" height="0.9" fill="#d3ccbc"/>
<text x="1102.8" y="129.47" font-size="13" fill="#222" textLength="29" lengthAdjust="spacingAndGlyphs">Zoom</text>
<rect x="1139" y="117.77" width="40.8" height="14.6" fill="#efe8d8" stroke="#fbf8f0" stroke-width="1"/>
<rect x="1139" y="131.67" width="40.8" height="0.9" fill="#d3ccbc"/>
<text x="1150.4" y="129.47" font-size="13" fill="#222" textLength="18" lengthAdjust="spacingAndGlyphs">Ant</text>
<rect x="1056" y="135.64" width="39.4" height="14.6" fill="#efe8d8" stroke="#fbf8f0" stroke-width="1"/>
<rect x="1056" y="149.54" width="39.4" height="0.9" fill="#d3ccbc"/>
<text x="1064.2" y="147.34" font-size="13" fill="#222" textLength="23" lengthAdjust="spacingAndGlyphs">NoD</text>
<rect x="1097.6" y="135.64" width="39.4" height="14.6" fill="#efe8d8" stroke="#fbf8f0" stroke-width="1"/>
<rect x="1097.6" y="149.54" width="39.4" height="0.9" fill="#d3ccbc"/>
<text x="1104.8" y="147.34" font-size="13" fill="#222" textLength="25" lengthAdjust="spacingAndGlyphs">ReDi</text>
<rect x="1139" y="135.64" width="40.8" height="14.6" fill="#efe8d8" stroke="#fbf8f0" stroke-width="1"/>
<rect x="1139" y="149.54" width="40.8" height="0.9" fill="#d3ccbc"/>
<text x="1151.4" y="147.34" font-size="13" fill="#222" textLength="16" lengthAdjust="spacingAndGlyphs">SD</text>
<rect x="1056" y="153.51" width="60.7" height="14.6" fill="#efe8d8" stroke="#fbf8f0" stroke-width="1"/>
<rect x="1056" y="167.41" width="60.7" height="0.9" fill="#d3ccbc"/>
<text x="1071.85" y="165.21" font-size="13" fill="#222" textLength="29" lengthAdjust="spacingAndGlyphs">Secci</text>
<rect x="1119.4" y="153.51" width="60.4" height="14.6" fill="#efe8d8" stroke="#fbf8f0" stroke-width="1"/>
<rect x="1119.4" y="167.41" width="60.4" height="0.9" fill="#d3ccbc"/>
<text x="1132.1" y="165.21" font-size="13" fill="#222" textLength="35" lengthAdjust="spacingAndGlyphs">S.Real</text>
<rect x="1056" y="171.38" width="60.7" height="14.6" fill="#efe8d8" stroke="#fbf8f0" stroke-width="1"/>
<rect x="1056" y="185.28" width="60.7" height="0.9" fill="#d3ccbc"/>
<text x="1072.85" y="183.08" font-size="13" fill="#222" textLength="27" lengthAdjust="spacingAndGlyphs">++  +</text>
<rect x="1119.4" y="171.38" width="60.4" height="14.6" fill="#efe8d8" stroke="#fbf8f0" stroke-width="1"/>
<rect x="1119.4" y="185.28" width="60.4" height="0.9" fill="#d3ccbc"/>
<text x="1136.1" y="183.08" font-size="13" fill="#222" textLength="27" lengthAdjust="spacingAndGlyphs">+  ++</text>
<rect x="1056" y="189.25" width="60.7" height="14.6" fill="#efe8d8" stroke="#fbf8f0" stroke-width="1"/>
<rect x="1056" y="203.15" width="60.7" height="0.9" fill="#d3ccbc"/>
<text x="1077.35" y="200.95" font-size="13" fill="#222" textLength="18" lengthAdjust="spacingAndGlyphs">--  -</text>
<rect x="1119.4" y="189.25" width="60.4" height="14.6" fill="#efe8d8" stroke="#fbf8f0" stroke-width="1"/>
<rect x="1119.4" y="203.15" width="60.4" height="0.9" fill="#d3ccbc"/>
<text x="1140.6" y="200.95" font-size="13" fill="#222" textLength="18" lengthAdjust="spacingAndGlyphs">-  --</text>
<rect x="1056" y="207.12" width="60.7" height="14.6" fill="#efe8d8" stroke="#fbf8f0" stroke-width="1"/>
<rect x="1056" y="221.02" width="60.7" height="0.9" fill="#d3ccbc"/>
<text x="1078.35" y="218.82" font-size="13" fill="#222" textLength="16" lengthAdjust="spacingAndGlyphs">PK</text>
<rect x="1119.4" y="207.12" width="60.4" height="14.6" fill="#efe8d8" stroke="#fbf8f0" stroke-width="1"/>
<rect x="1119.4" y="221.02" width="60.4" height="0.9" fill="#d3ccbc"/>
<text x="1132.6" y="218.82" font-size="13" fill="#222" textLength="34" lengthAdjust="spacingAndGlyphs">S.Tipo</text>
<rect x="1056" y="224.99" width="39.4" height="14.6" fill="#efe8d8" stroke="#fbf8f0" stroke-width="1"/>
<rect x="1056" y="238.89" width="39.4" height="0.9" fill="#d3ccbc"/>
<text x="1065.2" y="236.69" font-size="13" fill="#222" textLength="21" lengthAdjust="spacingAndGlyphs">Veg</text>
<rect x="1097.6" y="224.99" width="39.4" height="14.6" fill="#efe8d8" stroke="#fbf8f0" stroke-width="1"/>
<rect x="1097.6" y="238.89" width="39.4" height="0.9" fill="#d3ccbc"/>
<text x="1107.3" y="236.69" font-size="13" fill="#222" textLength="20" lengthAdjust="spacingAndGlyphs">V+I</text>
<rect x="1139" y="224.99" width="40.8" height="14.6" fill="#efe8d8" stroke="#fbf8f0" stroke-width="1"/>
<rect x="1139" y="238.89" width="40.8" height="0.9" fill="#d3ccbc"/>
<text x="1148.9" y="236.69" font-size="13" fill="#222" textLength="21" lengthAdjust="spacingAndGlyphs">Roc</text>
<rect x="1056" y="242.86" width="123.8" height="14.6" fill="#efe8d8" stroke="#fbf8f0" stroke-width="1"/>
<rect x="1056" y="256.76" width="123.8" height="0.9" fill="#d3ccbc"/>
<text x="1094.9" y="254.56" font-size="13" fill="#222" textLength="46" lengthAdjust="spacingAndGlyphs">V/H 1.00</text>
<rect x="1056" y="260.73" width="123.8" height="14.6" fill="#efe8d8" stroke="#fbf8f0" stroke-width="1"/>
<rect x="1056" y="274.63" width="123.8" height="0.9" fill="#d3ccbc"/>
<text x="1097.9" y="272.43" font-size="13" fill="#222" textLength="40" lengthAdjust="spacingAndGlyphs">ÚTILES</text>
<polygon points="1059,268.23 1063,264.73 1063,271.73" fill="#111" stroke="none" stroke-width="1" />
<rect x="1056" y="278.6" width="39.4" height="14.6" fill="#efe8d8" stroke="#fbf8f0" stroke-width="1"/>
<rect x="1056" y="292.5" width="39.4" height="0.9" fill="#d3ccbc"/>
<text x="1065.2" y="290.3" font-size="13" fill="#222" textLength="21" lengthAdjust="spacingAndGlyphs">Ras</text>
<rect x="1097.6" y="278.6" width="39.4" height="14.6" fill="#efe8d8" stroke="#fbf8f0" stroke-width="1"/>
<rect x="1097.6" y="292.5" width="39.4" height="0.9" fill="#d3ccbc"/>
<text x="1105.8" y="290.3" font-size="13" fill="#222" textLength="23" lengthAdjust="spacingAndGlyphs">V3D</text>
<rect x="1139" y="278.6" width="40.8" height="14.6" fill="#efe8d8" stroke="#fbf8f0" stroke-width="1"/>
<rect x="1139" y="292.5" width="40.8" height="0.9" fill="#d3ccbc"/>
<text x="1150.4" y="290.3" font-size="13" fill="#222" textLength="18" lengthAdjust="spacingAndGlyphs">Pla</text>
<rect x="1056" y="296.47" width="123.8" height="14.6" fill="#efe8d8" stroke="#fbf8f0" stroke-width="1"/>
<rect x="1056" y="310.37" width="123.8" height="0.9" fill="#d3ccbc"/>
<text x="1077.9" y="308.17" font-size="13" fill="#222" textLength="80" lengthAdjust="spacingAndGlyphs">PLATAFORMA</text>
<polygon points="1059,303.97 1063,300.47 1063,307.47" fill="#111" stroke="none" stroke-width="1" />
<rect x="1056" y="314.34" width="123.8" height="14.6" fill="#efe8d8" stroke="#fbf8f0" stroke-width="1"/>
<rect x="1056" y="328.24" width="123.8" height="0.9" fill="#d3ccbc"/>
<text x="1068.4" y="326.04" font-size="13" fill="#222" textLength="99" lengthAdjust="spacingAndGlyphs">COMPLEMENTOS</text>
<polygon points="1059,321.84 1063,318.34 1063,325.34" fill="#111" stroke="none" stroke-width="1" />
<rect x="1056" y="332.21" width="123.8" height="14.6" fill="#efe8d8" stroke="#fbf8f0" stroke-width="1"/>
<rect x="1056" y="346.11" width="123.8" height="0.9" fill="#d3ccbc"/>
<text x="1078.4" y="343.91" font-size="13" fill="#222" textLength="79" lengthAdjust="spacingAndGlyphs">SECCES.TIPO</text>
<polygon points="1059,339.71 1063,336.21 1063,343.21" fill="#111" stroke="none" stroke-width="1" />
<rect x="728.5" y="387.4" width="480" height="208" fill="#d9dde6"/>
<rect x="731" y="389.5" width="480" height="203.5" fill="#f2f4f8"/>
<rect x="733" y="390.8" width="480" height="22" fill="#63b8f7"/>
<rect x="733.5" y="412.8" width="480" height="180" fill="#000000"/>
<rect x="736" y="394" width="51" height="16.4" fill="#f0f2f4" stroke="#3f5f7f" stroke-width="1.2" rx="2.5"/>
<text x="744" y="406.6" font-size="12" fill="#262626" textLength="32.5" lengthAdjust="spacingAndGlyphs">DATOS</text>
<rect x="793.7" y="394" width="15.2" height="16.4" fill="#e8eef4" stroke="#3f5f7f" stroke-width="1.2" rx="2.5"/>
<rect x="811" y="394" width="15.2" height="16.4" fill="#e8eef4" stroke="#3f5f7f" stroke-width="1.2" rx="2.5"/>
<circle cx="799.6" cy="401" r="3.6" fill="#dfe8f0" stroke="#5a6a7a" stroke-width="1.1" />
<line x1="802" y1="404" x2="806" y2="408.5" stroke="#5a6a7a" stroke-width="1.6" />
<text x="803.5" y="400.5" font-size="7" fill="#2a7a2a" font-weight="bold">+</text>
<circle cx="818.6" cy="402.2" r="5" fill="#dfe8f0" stroke="#4a5a6a" stroke-width="1.1" />
<path d="M818.6 397.8 v8.8 M814.2 402.2 h8.8" fill="none" stroke="#1a4ad0" stroke-width="1.5" />
<rect x="865.5" y="394" width="32.5" height="16.4" fill="#f0f2f4" stroke="#3f5f7f" stroke-width="1.2" rx="2.5"/>
<text x="868.5" y="406.8" font-size="11.5" fill="#262626" textLength="27" lengthAdjust="spacingAndGlyphs">ST.per</text>
<rect x="901" y="394" width="15" height="16.4" fill="#7a7a7c" stroke="#444" stroke-width="1"/>
<polyline points="903,407 906,400 908.5,404 911,398.5 914.5,407" fill="none" stroke="#ffb0c0" stroke-width="1.3" />
<line x1="902.5" y1="408.5" x2="914.5" y2="408.5" stroke="#30c050" stroke-width="1.3" />
<rect x="1184.5" y="394.5" width="5" height="16" fill="#e4e8ee" stroke="#8fa0b8" stroke-width="0.8"/>
<rect x="1191.6" y="394.5" width="12" height="16" fill="#f0f2f4" stroke="#3f5f7f" stroke-width="1.2" rx="2"/>
<path d="M1194.5 398 l8 9 M1202.5 398 l-8 9" fill="none" stroke="#111" stroke-width="1.8" />
<text x="746" y="423.8" font-size="13" fill="#f4f4f4" textLength="85" lengthAdjust="spacingAndGlyphs">SECCIÓN REAL</text>
<text x="746" y="438.2" font-size="13" fill="#f4f4f4" textLength="106" lengthAdjust="spacingAndGlyphs">EJE 1  PK 7564.536</text>
<text x="746" y="452.5" font-size="13" fill="#f4f4f4" textLength="106" lengthAdjust="spacingAndGlyphs">D1 C1 &lt;ST1&gt; C1 D1</text>
<text x="746" y="467" font-size="13" fill="#10a8c8" textLength="115" lengthAdjust="spacingAndGlyphs" stroke="#10a8c8" stroke-width="0.35">S.T. 1: Seccion Tipo 1</text>
<text x="746" y="481.2" font-size="13" fill="#f4f4f4" textLength="92" lengthAdjust="spacingAndGlyphs">11.10%   -11.10%</text>
<line x1="733.5" y1="491.3" x2="1200" y2="443" stroke="#9a7048" stroke-width="1" />
<polyline points="774,486.6 792.7,515.3 821.5,549 868.9,579.6 967,590.4 985,594" fill="none" stroke="#10108a" stroke-width="1.1" />
<polyline points="774,486.6 782.6,510.2 806.3,546.4 814,546.4 852,533 1000.8,548.5 1046.5,554.2 1090,560" fill="none" stroke="#1098b0" stroke-width="1" />
<polyline points="852,533 909.4,509.6 1000.8,505.8 1046.5,510.5 1200,527.7" fill="none" stroke="#b0a030" stroke-width="1" />
<polyline points="782,510.2 793.7,510.2 811.3,537.3 880.7,512 909.4,509.6" fill="none" stroke="#d01818" stroke-width="1.3" />
<circle cx="782" cy="510.2" r="1.7" fill="#e02020" stroke="none" stroke-width="1" />
<circle cx="793.7" cy="510.2" r="1.7" fill="#e02020" stroke="none" stroke-width="1" />
<circle cx="811.3" cy="537.3" r="1.7" fill="#e02020" stroke="none" stroke-width="1" />
<circle cx="880.7" cy="512" r="1.7" fill="#e02020" stroke="none" stroke-width="1" />
<circle cx="909.4" cy="509.6" r="1.6" fill="none" stroke="#d8c040" stroke-width="1" />
<circle cx="1000.8" cy="505.8" r="1.6" fill="none" stroke="#d8c040" stroke-width="1" />
<circle cx="1046.5" cy="510.2" r="1.6" fill="none" stroke="#d8c040" stroke-width="1" />
<circle cx="852" cy="533" r="1.6" fill="none" stroke="#d8c040" stroke-width="1" />
<circle cx="774" cy="486.6" r="1.6" fill="#10a8c0" stroke="none" stroke-width="1" />
<circle cx="1000.8" cy="548.5" r="1.6" fill="#10a8c0" stroke="none" stroke-width="1" />
<circle cx="1046.5" cy="554.2" r="1.6" fill="#10a8c0" stroke="none" stroke-width="1" />
<rect x="804.5" y="544.7" width="3.4" height="3.4" fill="none" stroke="#20b8d0" stroke-width="0.9"/>
<rect x="812" y="544.7" width="3.4" height="3.4" fill="none" stroke="#20b8d0" stroke-width="0.9"/>
<text x="763.5" y="498.9" font-size="12" fill="#10a8c8" textLength="22.5" lengthAdjust="spacingAndGlyphs">1399</text>
<text x="771.7" y="523.7" font-size="12" fill="#10a8c8" textLength="22.3" lengthAdjust="spacingAndGlyphs">1103</text>
<text x="795.7" y="559.7" font-size="12" fill="#10a8c8" textLength="22" lengthAdjust="spacingAndGlyphs">1102</text>
<text x="805.5" y="559.7" font-size="12" fill="#10a8c8" textLength="16.5" lengthAdjust="spacingAndGlyphs">100</text>
<text x="844.5" y="526.7" font-size="12" fill="#e0b840" font-weight="bold" textLength="16.5" lengthAdjust="spacingAndGlyphs">100</text>
<text x="844.3" y="545.3" font-size="12" fill="#10a8c8" textLength="16.5" lengthAdjust="spacingAndGlyphs">100</text>
<text x="903.7" y="505.7" font-size="12" fill="#e0b840" font-weight="bold" textLength="12" lengthAdjust="spacingAndGlyphs">50</text>
<text x="995.7" y="501.7" font-size="12" fill="#e0b840" font-weight="bold" textLength="10.6" lengthAdjust="spacingAndGlyphs">11</text>
<text x="1043.3" y="506" font-size="12" fill="#e0b840" font-weight="bold" textLength="6" lengthAdjust="spacingAndGlyphs">2</text>
<text x="995.7" y="561.7" font-size="12" fill="#10a8c8" textLength="10.6" lengthAdjust="spacingAndGlyphs">11</text>
<text x="1043.3" y="566.8" font-size="12" fill="#10a8c8" textLength="6" lengthAdjust="spacingAndGlyphs">2</text>
<rect x="733.5" y="575.2" width="133.5" height="16.3" fill="#d8d0c0"/>
<text x="759.5" y="588" font-size="12.5" fill="#3a3a3a" textLength="32" lengthAdjust="spacingAndGlyphs">-4.853</text>
<text x="808.5" y="588" font-size="12.5" fill="#3a3a3a" textLength="49" lengthAdjust="spacingAndGlyphs">2797.726</text>
<rect x="1052" y="352.5" width="133" height="62" fill="#d5dbea"/>
<rect x="1054.5" y="354.5" width="128" height="57.5" fill="#000000"/>
<rect x="1079.5" y="356.3" width="78" height="53" fill="#000408" stroke="#10903a" stroke-width="1"/>
<polygon points="1081,358 1098,358 1108,372 1114,388 1124,404 1100,408 1082,400" fill="#06123f" stroke="none" stroke-width="1" />
<path d="M1083 360 q8 6 10 16 t10 18 t14 14" fill="none" stroke="#1838a8" stroke-width="0.8" />
<path d="M1088 358 q10 8 12 18 t12 16 t16 12" fill="none" stroke="#1838a8" stroke-width="0.8" />
<path d="M1095 357 q8 9 10 17 t14 13 t20 11" fill="none" stroke="#1838a8" stroke-width="0.8" />
<path d="M1102 358 q10 6 16 14 t18 10" fill="none" stroke="#1838a8" stroke-width="0.8" />
<path d="M1082 372 q6 10 8 18 t8 16" fill="none" stroke="#1838a8" stroke-width="0.8" />
<path d="M1110 358 q12 4 20 10 t22 6" fill="none" stroke="#1838a8" stroke-width="0.8" />
<path d="M1120 392 q10 8 30 10" fill="none" stroke="#1838a8" stroke-width="0.8" />
<path d="M1125 360 q10 2 28 2" fill="none" stroke="#1838a8" stroke-width="0.8" />
<path d="M1082 398 q8 4 14 8 M1140 396 l10 10" fill="none" stroke="#5a5a5a" stroke-width="0.7" />
<rect x="1116.6" y="379" width="30.4" height="13" fill="none" stroke="#20b8c8" stroke-width="1.2"/>
<rect x="1119" y="381" width="25.5" height="9" fill="none" stroke="#c8c040" stroke-width="1"/>
<rect x="1109" y="405" width="17" height="8" fill="#eef0f4" stroke="#555" stroke-width="0.9" rx="1.5"/>
<polygon points="1113,411 1122,411 1117.5,406.8" fill="#111" stroke="none" stroke-width="1" />
<rect x="0" y="596.5" width="1200" height="53.5" fill="#d2d4d6"/>
<rect x="0" y="595.3" width="1200" height="2.2" fill="#aeb6c2"/>
<rect x="0" y="597.5" width="90" height="52.5" fill="#dfe2e6"/>
<path d="M30 624 v10 M36 624 h9 v5 h-9 v5 h9 M50 624 v14 M50 624 h8 v9 h-8 M63 624 h8 v10 h-8 Z M77 618 v16" fill="none" stroke="#4a5058" stroke-width="1.8" />
<path d="M28 634 h52 M48 636 v7 h10" fill="none" stroke="#4a5058" stroke-width="1.6" />
<path d="M8 624 q3 4 1.5 14 q-3 -6 -1.5 -14" fill="#2a80e0" stroke="none" stroke-width="1" />
<text x="62" y="641" font-size="5" fill="#3a80c8" font-weight="bold" textLength="18" lengthAdjust="spacingAndGlyphs">CIVIL</text>
<rect x="90" y="597.5" width="82" height="52.5" fill="#cfd5dc"/>
<line x1="90" y1="597.5" x2="90" y2="650" stroke="#9aa4b0" stroke-width="1" />
<rect x="93" y="600" width="21.5" height="13" fill="#dfe4f0" stroke="#6a7a9a" stroke-width="0.8" rx="2"/>
<rect x="94" y="600.5" width="9" height="4" fill="#2a3a8a"/>
<text x="100" y="611.5" font-size="11" fill="#5a4a9a" textLength="13" lengthAdjust="spacingAndGlyphs">18</text>
<text x="95" y="611.5" font-size="9" fill="#3a3a8a" textLength="5" lengthAdjust="spacingAndGlyphs">3</text>
<rect x="93" y="618" width="17" height="14" fill="#e8eaec" stroke="#3a4a5a" stroke-width="1.6" rx="3"/>
<text x="98.5" y="629.5" font-size="11" fill="#111" font-weight="bold">L</text>
<circle cx="96.3" cy="629.5" r="1.5" fill="#20a040" stroke="none" stroke-width="1" />
<rect x="93" y="635" width="19" height="15" fill="#101418"/>
<rect x="95" y="637" width="15" height="9" fill="#1a2028" stroke="#3a4048" stroke-width="0.8"/>
<rect x="120" y="635" width="18" height="15" fill="#18282a"/>
<circle cx="126" cy="644" r="3" fill="none" stroke="#18a0b0" stroke-width="1.5" />
<path d="M130 646 q5 -2 6 -9" fill="none" stroke="#e08a20" stroke-width="1.8" />
<defs><linearGradient id="gg" x1="0" x2="1"><stop offset="0" stop-color="#8a8a8a"/><stop offset="1" stop-color="#f4f4f4"/></linearGradient></defs>
<rect x="147" y="636" width="20" height="14" fill="url(#gg)"/>
<line x1="147" y1="636.5" x2="167" y2="636.5" stroke="#222" stroke-width="1" stroke-dasharray="1 2.2"/>
<line x1="166.5" y1="636" x2="166.5" y2="650" stroke="#222" stroke-width="1" stroke-dasharray="1 2.2"/>
<rect x="117.5" y="599.3" width="51" height="14.8" fill="#dfd7c7" stroke="#587890" stroke-width="1.4" rx="3"/>
<text x="123" y="611.9" font-size="11.5" fill="#3a3628" textLength="39" lengthAdjust="spacingAndGlyphs">Eng Libre</text>
<rect x="117.5" y="618" width="51" height="14.6" fill="#dfd7c7" stroke="#587890" stroke-width="1.4" rx="3"/>
<text x="122.5" y="629.6" font-size="13" fill="#363678" textLength="31.7" lengthAdjust="spacingAndGlyphs">1:1000</text>
<rect x="170.7" y="598.8" width="268" height="17.9" fill="#eaeaea" stroke="#9fb3c7" stroke-width="1.2"/>
<text x="187.5" y="612.6" font-size="13" fill="#3c3c3c" textLength="59" lengthAdjust="spacingAndGlyphs">609933.083</text>
<text x="254.7" y="612.6" font-size="13" fill="#3c3c3c" textLength="65.3" lengthAdjust="spacingAndGlyphs">8565418.421</text>
<text x="328" y="612.6" font-size="13" fill="#3c3c3c" textLength="46.7" lengthAdjust="spacingAndGlyphs">2797.726</text>
<text x="393.3" y="612.6" font-size="13" fill="#3c3c3c" textLength="12" lengthAdjust="spacingAndGlyphs">m.</text>
<rect x="439.5" y="597.5" width="760.5" height="20" fill="#d5cebf"/>
<rect x="439.5" y="597.5" width="222" height="20" fill="#dcd5c6"/>
<rect x="172" y="617.2" width="778" height="21" fill="#cacacb"/>
<rect x="172" y="641" width="778" height="9" fill="#d0d0d1"/>
<text x="176" y="631.5" font-size="12.5" fill="#7c7c7e" textLength="129.3" lengthAdjust="spacingAndGlyphs">Secciones tipo: Desmonte</text>
<text x="176" y="650.3" font-size="12.5" fill="#3a3a3c" textLength="124" lengthAdjust="spacingAndGlyphs">Secciones tipo: Terraplén</text>
<text x="665.7" y="632" font-size="12.5" fill="#7a7a7c" textLength="177" lengthAdjust="spacingAndGlyphs">Clic en pantalla para eco informativo</text>
<text x="665.7" y="650.3" font-size="12.5" fill="#3a3a3c" textLength="177" lengthAdjust="spacingAndGlyphs">Clic en pantalla para eco informativo</text>
<rect x="933" y="618.6" width="16" height="15.5" fill="#b6cae6" stroke="#9ab0d0" stroke-width="0.8"/>
<polyline points="937.5,628.5 941,625 944.5,628.5" fill="none" stroke="#2a4a9a" stroke-width="1.8" />
<rect x="933" y="637" width="16" height="13" fill="#b6cae6" stroke="#9ab0d0" stroke-width="0.8"/>
<polyline points="937.5,641.5 941,645 944.5,641.5" fill="none" stroke="#2a4a9a" stroke-width="1.8" />
<rect x="950" y="617.5" width="250" height="32.5" fill="#c3bcac"/>
<rect x="950" y="597.5" width="157" height="20" fill="#c8c1b1"/>
<rect x="661" y="597.2" width="289" height="19.6" fill="#cdd7e1"/>
<path d="M664 609 h15 l-2.5 5 h-10 Z" fill="#7a3030" stroke="#401818" stroke-width="0.6" />
<rect x="665" y="606.5" width="8" height="2.8" fill="#c03030"/>
<text x="673.5" y="606.5" font-size="10" fill="#1a4ad0" font-weight="bold" style="font-family:Liberation Serif,serif">i</text>
<rect x="683" y="598.5" width="16.7" height="16.5" fill="#2f78b8" stroke="#1a4a80" stroke-width="1"/>
<text x="685" y="612.3" font-size="13" fill="#f4f8ff" font-weight="bold" textLength="12.5" lengthAdjust="spacingAndGlyphs">M</text>
<rect x="701.6" y="598.3" width="34.1" height="17" fill="#dde0e4" stroke="#bcc4cc" stroke-width="0.8"/>
<text x="718.65" y="611.7" font-size="12.5" fill="#333" text-anchor="middle">1</text>
<rect x="736.6" y="598.5" width="16.8" height="16.5" fill="#c3cfdb" stroke="#8a9ab0" stroke-width="0.9"/>
<line x1="740" y1="612" x2="750" y2="601.5" stroke="#2020b0" stroke-width="1.4" />
<circle cx="740" cy="612" r="1.2" fill="#2020b0" stroke="none" stroke-width="1" />
<circle cx="750" cy="601.5" r="1.2" fill="#2020b0" stroke="none" stroke-width="1" />
<rect x="755" y="598.3" width="33" height="17" fill="#dde0e4" stroke="#bcc4cc" stroke-width="0.8"/>
<text x="771.5" y="611.7" font-size="12.5" fill="#333" text-anchor="middle">0</text>
<rect x="790" y="598.5" width="17" height="16.5" fill="#3a78d8" stroke="#1a3a8a" stroke-width="1"/>
<polygon points="798.5,602 804.5,612 792.5,612" fill="#0a1a50" stroke="none" stroke-width="1" />
<polygon points="798.5,605.5 801.5,610.5 795.5,610.5" fill="#5a90e8" stroke="none" stroke-width="1" />
<rect x="809" y="598.3" width="31.6" height="17" fill="#dde0e4" stroke="#bcc4cc" stroke-width="0.8"/>
<text x="824.8" y="611.7" font-size="12.5" fill="#333" text-anchor="middle">1</text>
<rect x="842" y="598.5" width="19.6" height="16.5" fill="#c9d6b0" stroke="#8a9a6a" stroke-width="0.8"/>
<text x="844" y="611.5" font-size="13" fill="#3a6a2a" textLength="16" lengthAdjust="spacingAndGlyphs">Aa</text>
<rect x="863" y="598.3" width="31" height="17" fill="#dde0e4" stroke="#bcc4cc" stroke-width="0.8"/>
<text x="878.5" y="611.7" font-size="12.5" fill="#333" text-anchor="middle">0</text>
<rect x="896.6" y="598.5" width="18.4" height="16.5" fill="#e8ecf4" stroke="#8a9ab0" stroke-width="0.8"/>
<rect x="905" y="600" width="8.5" height="4" fill="#2a5ac8"/>
<path d="M911 603 h-8 q-4 0 -4 2.6 q0 2.6 4 2.6 h4 q4 0 4 2.4 q0 2.4 -4 2.4 h-7" fill="none" stroke="#1a2a6a" stroke-width="1.5" />
<rect x="917.6" y="598.3" width="30.4" height="17" fill="#dde0e4" stroke="#bcc4cc" stroke-width="0.8"/>
<text x="932.8" y="611.7" font-size="12.5" fill="#333" text-anchor="middle">0</text>
<rect x="1107.5" y="598.5" width="52.5" height="52" fill="#d4d0c6" stroke="#9a9a9a" stroke-width="1"/>
<path d="M1111 607 q0 -4.5 4.5 -4.5 h33 l9 8 v33 q0 4.5 -4.5 4.5 h-37.5 q-4.5 0 -4.5 -4.5 Z" fill="#0b45cf" stroke="none" stroke-width="1" />
<rect x="1121.7" y="602.8" width="26" height="14" fill="#a8a6a4"/>
<rect x="1138" y="605.5" width="6" height="8.5" fill="#0b45cf" rx="1.5"/>
<rect x="1120.8" y="623" width="27.4" height="16.5" fill="#cfcdc9"/>
<line x1="1124" y1="628" x2="1145" y2="628" stroke="#555" stroke-width="1" />
<line x1="1124" y1="633.3" x2="1145" y2="633.3" stroke="#555" stroke-width="1" />
<rect x="1163" y="598.5" width="40" height="52" fill="#d4d0c6" stroke="#9a9a9a" stroke-width="1"/>
<defs><radialGradient id="qb" cx="0.4" cy="0.3" r="0.8"><stop offset="0" stop-color="#bfe4fa"/><stop offset="0.6" stop-color="#2a90d8"/><stop offset="1" stop-color="#0a508a"/></radialGradient></defs>
<ellipse cx="1190" cy="621" rx="21" ry="19" fill="url(#qb)"/>
<polygon points="1186,637 1196,636 1194,646" fill="#1a70b8" stroke="none" stroke-width="1" />
<text x="1181" y="636" font-size="30" fill="#0a0a0a" font-weight="bold" textLength="17" lengthAdjust="spacingAndGlyphs">?</text>
<rect x="677.5" y="637.8" width="522.5" height="3.2" fill="#ffffff" opacity="0.38"/>
<defs><linearGradient id="pr" x1="0" x2="1"><stop offset="0" stop-color="#ff0033"/><stop offset="0.86" stop-color="#ff0033"/><stop offset="1" stop-color="#ff2a8a"/></linearGradient></defs>
<rect x="0" y="637.8" width="677.5" height="3.2" fill="url(#pr)"/>
<circle cx="865" cy="628.5" r="25.5" fill="#f0e040" stroke="none" stroke-width="1" opacity="0.34"/>
<path d="M860.8 624.3 V635.8 L863.4 633.3 L865.3 637.6 L867 636.8 L865.1 632.6 L868.8 632.4 Z" fill="#ffffff" stroke="#222" stroke-width="0.9" />
<rect x="1.3" y="603" width="98.2" height="24" fill="#1c1c1c" rx="4" opacity="0.93"/>
<text x="9.7" y="619.7" font-size="13" fill="#ffffff" font-weight="bold" textLength="81" lengthAdjust="spacingAndGlyphs">Reproducir (k)</text>
</svg>
</body></html>
